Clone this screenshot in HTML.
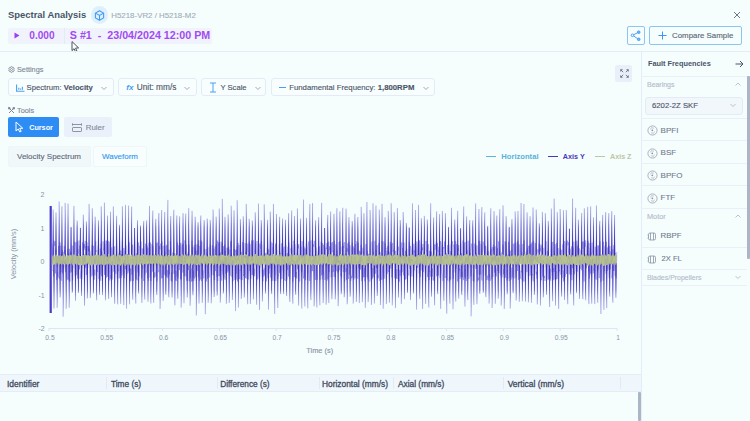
<!DOCTYPE html>
<html><head><meta charset="utf-8">
<style>
*{margin:0;padding:0;box-sizing:border-box}
html,body{width:750px;height:421px;overflow:hidden;background:#f5fefd;font-family:"Liberation Sans",sans-serif;position:relative}
.a{position:absolute;white-space:nowrap}
.m{-webkit-text-stroke:0.12px currentColor}
.mh{-webkit-text-stroke:0.3px currentColor}
.t{line-height:1}
.dd{position:absolute;height:18px;top:78px;border:1px solid #e3ecf6;border-radius:3px;background:#f8fefe}
.dd span{position:absolute;top:4px;font-size:9px;color:#4b5567;line-height:1}
.ffrow{position:absolute;left:641px;width:106px;height:22.6px;border-bottom:1px solid #e9f0f7}
.ffrow span{position:absolute;left:20px;top:7px;font-size:8.5px;color:#717c90;line-height:1}
.th{position:absolute;top:380px;font-size:8px;color:#4b5567;line-height:1;font-weight:bold}
.sep{position:absolute;top:377px;width:1px;height:12px;background:#e3eaf3}
.yl{position:absolute;font-size:7px;color:#8a93a6;line-height:1}
.xl{position:absolute;top:334.5px;font-size:6.7px;color:#8a93a6;line-height:1}
</style></head><body>
<!-- header -->
<div class="a" style="left:90.6px;top:6.4px;width:17.4px;height:17.4px;border-radius:50%;background:#dfeffb"></div>
<svg class="a" style="left:94.3px;top:9.8px" width="11" height="11" viewBox="0 0 24 24" fill="none" stroke="#3b9af2" stroke-width="2.3" stroke-linejoin="round"><path d="M12 1.8 L21 6.8 L21 17.2 L12 22.2 L3 17.2 L3 6.8 Z M3 6.8 L12 11.8 L21 6.8 M12 11.8 L12 22.2"/></svg>
<svg class="a" style="left:733px;top:11px" width="8" height="8" viewBox="0 0 8 8" stroke="#6e7787" stroke-width="1"><path d="M1 1 L7 7 M7 1 L1 7"/></svg>

<div class="a" style="left:8px;top:28px;width:204px;height:16px;background:#f0f3fc;border-radius:2px"></div>
<div class="a" style="left:64px;top:28px;width:1px;height:16px;background:#e6e9f6"></div>
<svg class="a" style="left:14px;top:32px" width="6" height="7" viewBox="0 0 6 7"><path d="M0.5 0.5 L5.5 3.5 L0.5 6.5Z" fill="#9b3ff0"/></svg>
<!-- mouse cursor -->
<svg class="a" style="left:71px;top:41px" width="9" height="12" viewBox="0 0 9 12"><path d="M1 0.6 L1 9.6 L3.1 7.7 L4.5 10.8 L5.9 10.1 L4.6 7.1 L7.6 6.9 Z" fill="#fff" stroke="#3a3f4a" stroke-width="0.9" stroke-linejoin="round"/></svg>

<div class="a" style="left:627px;top:26px;width:18px;height:19px;border:1px solid #8cc4f2;border-radius:2px"></div>
<svg class="a" style="left:630px;top:30px" width="12" height="12" viewBox="0 0 12 12" fill="none" stroke="#3d97ee" stroke-width="0.9"><circle cx="8.7" cy="2.2" r="1.3" fill="#7ab8f2"/><circle cx="2.5" cy="5.3" r="1.3"/><circle cx="8.7" cy="9.3" r="1.3" fill="#7ab8f2"/><path d="M3.7 4.7 L7.5 2.8 M3.7 5.9 L7.5 8.7"/></svg>
<div class="a" style="left:649px;top:26px;width:93px;height:19px;border:1px solid #8cc4f2;border-radius:2px"></div>
<svg class="a" style="left:658px;top:31px" width="9" height="9" viewBox="0 0 9 9" stroke="#3d97ee" stroke-width="1"><path d="M4.5 0.5 V8.5 M0.5 4.5 H8.5"/></svg>

<div class="a" style="left:0;top:51px;width:750px;height:1px;background:#e4edf7"></div>
<div class="a" style="left:641px;top:51px;width:1px;height:370px;background:#e4edf7"></div>

<!-- settings -->
<svg class="a" style="left:7.7px;top:65.8px" width="7" height="7" viewBox="0 0 14 14" fill="none" stroke="#7d8799" stroke-width="1.6"><circle cx="7" cy="7" r="2"/><path d="M7 1 L8.2 2.6 L10.2 2 L10.6 4 L12.6 4.8 L11.6 7 L12.6 9.2 L10.6 10 L10.2 12 L8.2 11.4 L7 13 L5.8 11.4 L3.8 12 L3.4 10 L1.4 9.2 L2.4 7 L1.4 4.8 L3.4 4 L3.8 2 L5.8 2.6 Z"/></svg>

<div class="dd" style="left:8px;width:106px"><svg class="a" style="left:6.6px;top:4.6px" width="9" height="8" viewBox="0 0 9 8" fill="none" stroke="#48a0f0" stroke-width="1.1"><path d="M0.6 0.5 V7.2 H8.5 M2.8 5.8 V3.8 M4.6 5.8 V4.6 M6.4 5.8 V2.8"/></svg><svg class="a" style="left:92.2px;top:6.8px" width="6" height="5" viewBox="0 0 6 5" fill="none" stroke="#8a94a6" stroke-width="0.8"><path d="M0.5,1 L3,3.5 L5.5,1"/></svg></div>
<div class="dd" style="left:118px;width:79px"><span style="left:7.3px;top:4.6px;color:#3f9cf0;font-style:italic;font-weight:bold;font-size:8px">fx</span><svg class="a" style="left:65.3px;top:6.8px" width="6" height="5" viewBox="0 0 6 5" fill="none" stroke="#8a94a6" stroke-width="0.8"><path d="M0.5,1 L3,3.5 L5.5,1"/></svg></div>
<div class="dd" style="left:201px;width:65px"><svg class="a" style="left:7px;top:3px" width="8" height="11" viewBox="0 0 8 11" fill="none" stroke="#48a0f0" stroke-width="1"><path d="M1 1 H7 M1 10 H7 M4 1 V10"/></svg><svg class="a" style="left:52.5px;top:6.8px" width="6" height="5" viewBox="0 0 6 5" fill="none" stroke="#8a94a6" stroke-width="0.8"><path d="M0.5,1 L3,3.5 L5.5,1"/></svg></div>
<div class="dd" style="left:271px;width:164px"><div class="a" style="left:7px;top:8px;width:7px;height:1px;background:#48a0f0"></div><svg class="a" style="left:150.5px;top:6.8px" width="6" height="5" viewBox="0 0 6 5" fill="none" stroke="#8a94a6" stroke-width="0.8"><path d="M0.5,1 L3,3.5 L5.5,1"/></svg></div>

<svg class="a" style="left:8px;top:107.3px" width="7" height="7" viewBox="0 0 7 7" fill="none" stroke="#7d8799" stroke-width="1"><path d="M1 1 L6 6 M6 1 L1 6"/><circle cx="1.2" cy="1.2" r="0.9" fill="#7d8799"/><circle cx="5.8" cy="1.2" r="0.9" fill="#7d8799"/></svg>

<div class="a" style="left:8px;top:117px;width:51px;height:20px;background:#2d8df4;border-radius:2px"></div>
<svg class="a" style="left:15px;top:121px" width="9" height="12" viewBox="0 0 9 12"><path d="M1 1 L1 10 L3.2 8 L4.8 11 L6.2 10.3 L4.7 7.3 L7.8 7.3 Z" fill="none" stroke="#fff" stroke-width="1" stroke-linejoin="round"/></svg>
<div class="a" style="left:64px;top:117px;width:48px;height:20px;background:#eaf1fa;border-radius:2px"></div>
<svg class="a" style="left:71.5px;top:122.5px" width="10" height="9" viewBox="0 0 10 9" fill="none" stroke="#808a9c" stroke-width="0.9"><path d="M0.5 1.5 H9.5 M0.5 0.3 V2.7 M9.5 0.3 V2.7"/><rect x="0.5" y="4.5" width="9" height="4" rx="0.6"/></svg>

<!-- expand icon -->
<div class="a" style="left:615px;top:65px;width:17px;height:17px;background:#e9f0f9;border-radius:2px"></div>
<svg class="a" style="left:619.5px;top:69.3px" width="9" height="9" viewBox="0 0 9 9" fill="none" stroke="#5b6577" stroke-width="0.8"><path d="M0.7 2.6 V0.7 H2.6 M0.7 0.7 L3.2 3.2 M8.3 2.6 V0.7 H6.4 M8.3 0.7 L5.8 3.2 M0.7 6.4 V8.3 H2.6 M0.7 8.3 L3.2 5.8 M8.3 6.4 V8.3 H6.4 M8.3 8.3 L5.8 5.8"/></svg>

<!-- tabs -->
<div class="a" style="left:8px;top:146px;width:83px;height:21px;background:#f1f8fa;border:1px solid #eef6f8;border-radius:2px"></div>
<div class="a" style="left:93px;top:146px;width:54px;height:21px;background:#f8fefe;border:1px solid #eff6f8;border-radius:2px"></div>

<!-- legend -->
<div class="a" style="left:486px;top:156px;width:10px;height:1px;background:#5cb5dd"></div>
<div class="a" style="left:548px;top:156px;width:10px;height:1px;background:#4838bc"></div>
<div class="a" style="left:595px;top:156px;width:10px;height:1px;background:#bcc6a8"></div>

<!-- chart -->
<div class="yl" style="left:40.5px;top:191px">2</div>
<div class="yl" style="left:40.5px;top:224.5px">1</div>
<div class="yl" style="left:40.5px;top:258px">0</div>
<div class="yl" style="left:38.5px;top:291.5px">-1</div>
<div class="yl" style="left:38.5px;top:325px">-2</div>
<div class="a t" style="left:14px;top:253.5px;font-size:7.4px;color:#8a93a6;transform:translate(-50%,-50%) rotate(-90deg);transform-origin:center">Velocity (mm/s)</div>
<svg class="a" style="left:0;top:0" width="750" height="421">
<path d="M49 328.5 H617" stroke="#dfe6f3" stroke-width="1"/>
<path d="M49 328 v3 M105.8 328 v3 M162.6 328 v3 M219.4 328 v3 M276.2 328 v3 M333 328 v3 M389.8 328 v3 M446.6 328 v3 M503.4 328 v3 M560.2 328 v3 M617 328 v3" stroke="#dfe6f3" stroke-width="1"/>
<defs><linearGradient id="gu" gradientUnits="userSpaceOnUse" x1="0" y1="256" x2="0" y2="200"><stop offset="0" stop-color="#3a2abe"/><stop offset="0.55" stop-color="#3f2fc0"/><stop offset="1" stop-color="#4a3ac4" stop-opacity="0.4"/></linearGradient>
<linearGradient id="gd" gradientUnits="userSpaceOnUse" x1="0" y1="264" x2="0" y2="318"><stop offset="0" stop-color="#3a2abe"/><stop offset="0.5" stop-color="#3f2fc0"/><stop offset="1" stop-color="#4a3ac4" stop-opacity="0.4"/></linearGradient></defs>
<path d="M52.10,243.6 L52.48,253.7 L52.86,270.7 L53.24,269.8 L53.62,276.3 L54.00,240.7 L54.38,242.0 L54.76,246.0 L55.14,241.3 L55.52,273.5 L55.90,249.5 L56.28,268.9 L56.66,279.9 L57.04,277.2 L57.42,272.2 L57.80,272.3 L58.18,277.5 L58.56,246.0 L58.94,272.0 L59.32,279.2 L59.70,274.9 L60.08,242.5 L60.46,273.5 L60.84,245.7 L61.22,280.8 L61.60,252.5 L61.98,272.2 L62.36,250.0 L62.74,273.6 L63.12,251.9 L63.50,269.7 L63.88,268.3 L64.26,246.0 L64.64,253.4 L65.02,250.2 L65.40,271.7 L65.78,253.8 L66.16,271.8 L66.54,275.1 L66.92,279.5 L67.30,279.6 L67.68,249.2 L68.06,279.6 L68.44,252.8 L68.82,272.9 L69.20,280.9 L69.58,248.8 L69.96,281.7 L70.34,252.3 L70.72,272.7 L71.10,251.9 L71.48,267.8 L71.86,272.1 L72.24,245.6 L72.62,280.5 L73.00,269.3 L73.38,268.2 L73.76,245.1 L74.14,244.6 L74.52,241.7 L74.90,269.1 L75.28,276.3 L75.66,242.4 L76.04,253.7 L76.42,268.1 L76.80,275.1 L77.18,241.4 L77.56,278.7 L77.94,249.2 L78.32,253.9 L78.70,243.7 L79.08,240.5 L79.46,269.4 L79.84,245.4 L80.22,278.7 L80.60,273.4 L80.98,272.0 L81.36,270.1 L81.74,279.4 L82.12,274.3 L82.50,242.4 L82.88,248.9 L83.26,250.4 L83.64,244.7 L84.02,247.9 L84.40,243.9 L84.78,249.8 L85.16,240.9 L85.54,267.8 L85.92,246.0 L86.30,275.0 L86.68,272.1 L87.06,242.3 L87.44,274.0 L87.82,246.0 L88.20,251.1 L88.58,246.4 L88.96,251.1 L89.34,248.9 L89.72,250.4 L90.10,251.4 L90.48,252.7 L90.86,270.8 L91.24,276.5 L91.62,268.8 L92.00,246.0 L92.38,244.8 L92.76,275.6 L93.14,250.1 L93.52,245.8 L93.90,273.0 L94.28,279.6 L94.66,269.6 L95.04,275.4 L95.42,243.9 L95.80,241.5 L96.18,250.2 L96.56,251.5 L96.94,250.4 L97.32,268.8 L97.70,272.1 L98.08,245.6 L98.46,245.9 L98.84,279.0 L99.22,273.9 L99.60,268.6 L99.98,274.5 L100.36,248.6 L100.74,280.8 L101.12,243.5 L101.50,276.3 L101.88,251.5 L102.26,272.3 L102.64,249.2 L103.02,241.3 L103.40,246.4 L103.78,250.3 L104.16,248.5 L104.54,275.0 L104.92,243.6 L105.30,274.4 L105.68,273.9 L106.06,240.4 L106.44,277.6 L106.82,240.9 L107.20,252.6 L107.58,276.8 L107.96,242.3 L108.34,254.1 L108.72,240.9 L109.10,242.7 L109.48,242.5 L109.86,280.5 L110.24,243.7 L110.62,278.7 L111.00,275.1 L111.38,277.7 L111.76,247.4 L112.14,279.6 L112.52,268.4 L112.90,267.8 L113.28,251.5 L113.66,271.6 L114.04,270.9 L114.42,248.1 L114.80,246.3 L115.18,271.0 L115.56,271.3 L115.94,273.8 L116.32,269.4 L116.70,251.0 L117.08,278.5 L117.46,278.4 L117.84,269.1 L118.22,271.2 L118.60,268.3 L118.98,252.9 L119.36,278.4 L119.74,249.9 L120.12,253.7 L120.50,273.1 L120.88,250.7 L121.26,278.0 L121.64,254.2 L122.02,275.5 L122.40,241.6 L122.78,249.2 L123.16,271.6 L123.54,273.7 L123.92,248.0 L124.30,278.0 L124.68,269.1 L125.06,250.9 L125.44,269.2 L125.82,245.3 L126.20,275.0 L126.58,275.0 L126.96,270.5 L127.34,254.0 L127.72,273.5 L128.10,272.4 L128.48,241.7 L128.86,271.3 L129.24,242.4 L129.62,271.2 L130.00,268.9 L130.38,281.5 L130.76,268.3 L131.14,280.8 L131.52,253.6 L131.90,274.9 L132.28,251.4 L132.66,244.7 L133.04,270.2 L133.42,280.9 L133.80,275.7 L134.18,248.1 L134.56,242.2 L134.94,269.3 L135.32,271.9 L135.70,272.2 L136.08,279.4 L136.46,253.3 L136.84,276.9 L137.22,280.4 L137.60,243.9 L137.98,272.5 L138.36,242.4 L138.74,274.9 L139.12,276.2 L139.50,273.5 L139.88,245.9 L140.26,249.5 L140.64,253.0 L141.02,241.6 L141.40,278.2 L141.78,277.1 L142.16,248.3 L142.54,249.1 L142.92,269.3 L143.30,249.0 L143.68,281.0 L144.06,269.9 L144.44,271.6 L144.82,274.6 L145.20,251.1 L145.58,243.7 L145.96,270.8 L146.34,272.7 L146.72,268.9 L147.10,245.8 L147.48,278.4 L147.86,247.7 L148.24,273.8 L148.62,280.7 L149.00,243.2 L149.38,252.8 L149.76,247.1 L150.14,277.5 L150.52,242.4 L150.90,280.9 L151.28,244.5 L151.66,245.0 L152.04,244.6 L152.42,271.7 L152.80,245.8 L153.18,252.4 L153.56,271.7 L153.94,278.0 L154.32,277.8 L154.70,272.3 L155.08,276.9 L155.46,276.2 L155.84,250.6 L156.22,243.1 L156.60,246.2 L156.98,281.4 L157.36,242.4 L157.74,247.4 L158.12,268.2 L158.50,272.2 L158.88,269.4 L159.26,246.1 L159.64,247.4 L160.02,249.4 L160.40,245.5 L160.78,243.6 L161.16,269.2 L161.54,278.3 L161.92,241.6 L162.30,277.4 L162.68,278.2 L163.06,246.0 L163.44,246.1 L163.82,246.2 L164.20,274.8 L164.58,271.9 L164.96,252.4 L165.34,276.2 L165.72,267.9 L166.10,245.5 L166.48,276.5 L166.86,244.7 L167.24,278.2 L167.62,270.1 L168.00,276.0 L168.38,276.9 L168.76,273.6 L169.14,249.7 L169.52,274.4 L169.90,269.4 L170.28,241.1 L170.66,251.6 L171.04,280.8 L171.42,272.3 L171.80,281.6 L172.18,271.5 L172.56,252.6 L172.94,253.3 L173.32,253.3 L173.70,273.8 L174.08,273.0 L174.46,270.4 L174.84,253.1 L175.22,271.4 L175.60,280.4 L175.98,270.8 L176.36,281.1 L176.74,254.2 L177.12,276.5 L177.50,242.5 L177.88,278.7 L178.26,274.6 L178.64,248.0 L179.02,244.8 L179.40,270.1 L179.78,243.2 L180.16,245.4 L180.54,279.2 L180.92,242.8 L181.30,279.8 L181.68,246.8 L182.06,245.8 L182.44,244.5 L182.82,272.6 L183.20,243.6 L183.58,247.7 L183.96,270.8 L184.34,275.9 L184.72,240.5 L185.10,241.9 L185.48,244.1 L185.86,276.5 L186.24,244.7 L186.62,280.7 L187.00,270.5 L187.38,254.1 L187.76,280.8 L188.14,252.3 L188.52,270.1 L188.90,244.6 L189.28,281.4 L189.66,276.8 L190.04,270.3 L190.42,277.8 L190.80,271.2 L191.18,268.4 L191.56,281.6 L191.94,240.7 L192.32,281.3 L192.70,247.0 L193.08,278.0 L193.46,271.4 L193.84,280.9 L194.22,245.1 L194.60,278.6 L194.98,247.8 L195.36,250.7 L195.74,276.7 L196.12,244.4 L196.50,280.9 L196.88,250.6 L197.26,270.9 L197.64,246.1 L198.02,244.3 L198.40,277.3 L198.78,240.3 L199.16,277.6 L199.54,280.9 L199.92,245.9 L200.30,279.4 L200.68,279.3 L201.06,240.3 L201.44,281.0 L201.82,241.6 L202.20,272.4 L202.58,275.5 L202.96,270.4 L203.34,278.6 L203.72,269.7 L204.10,251.6 L204.48,249.1 L204.86,252.5 L205.24,277.9 L205.62,276.6 L206.00,249.0 L206.38,281.5 L206.76,273.8 L207.14,252.5 L207.52,278.8 L207.90,247.3 L208.28,273.0 L208.66,272.6 L209.04,276.2 L209.42,277.4 L209.80,247.2 L210.18,245.0 L210.56,244.7 L210.94,269.3 L211.32,270.2 L211.70,274.8 L212.08,248.1 L212.46,245.3 L212.84,269.9 L213.22,275.4 L213.60,269.9 L213.98,248.6 L214.36,280.0 L214.74,280.1 L215.12,246.4 L215.50,271.1 L215.88,251.8 L216.26,244.5 L216.64,250.7 L217.02,276.6 L217.40,240.6 L217.78,281.1 L218.16,242.2 L218.54,244.0 L218.92,276.0 L219.30,243.4 L219.68,242.4 L220.06,276.4 L220.44,252.5 L220.82,271.3 L221.20,241.7 L221.58,280.6 L221.96,253.4 L222.34,243.3 L222.72,270.4 L223.10,274.7 L223.48,246.1 L223.86,277.6 L224.24,253.1 L224.62,244.7 L225.00,279.8 L225.38,251.1 L225.76,273.7 L226.14,268.6 L226.52,272.0 L226.90,247.7 L227.28,253.9 L227.66,272.5 L228.04,248.0 L228.42,270.8 L228.80,246.6 L229.18,271.2 L229.56,273.2 L229.94,249.4 L230.32,275.8 L230.70,241.4 L231.08,247.4 L231.46,240.5 L231.84,276.7 L232.22,275.3 L232.60,269.7 L232.98,281.2 L233.36,271.4 L233.74,270.3 L234.12,249.0 L234.50,275.8 L234.88,280.0 L235.26,249.7 L235.64,252.4 L236.02,273.5 L236.40,249.6 L236.78,279.6 L237.16,246.4 L237.54,281.5 L237.92,245.1 L238.30,242.9 L238.68,273.7 L239.06,244.9 L239.44,279.2 L239.82,269.8 L240.20,270.6 L240.58,244.5 L240.96,279.5 L241.34,273.2 L241.72,251.9 L242.10,280.1 L242.48,242.1 L242.86,246.2 L243.24,254.1 L243.62,276.1 L244.00,274.0 L244.38,274.9 L244.76,273.3 L245.14,243.0 L245.52,278.0 L245.90,252.0 L246.28,278.7 L246.66,278.2 L247.04,252.3 L247.42,251.5 L247.80,243.5 L248.18,279.6 L248.56,268.6 L248.94,252.5 L249.32,241.9 L249.70,271.1 L250.08,244.1 L250.46,250.9 L250.84,278.8 L251.22,251.2 L251.60,240.4 L251.98,275.1 L252.36,241.7 L252.74,275.1 L253.12,241.9 L253.50,240.4 L253.88,274.6 L254.26,268.5 L254.64,276.3 L255.02,272.0 L255.40,243.3 L255.78,244.2 L256.16,251.7 L256.54,279.7 L256.92,241.0 L257.30,251.6 L257.68,279.4 L258.06,274.2 L258.44,270.2 L258.82,244.4 L259.20,277.5 L259.58,270.0 L259.96,243.4 L260.34,247.9 L260.72,248.6 L261.10,243.6 L261.48,240.9 L261.86,244.6 L262.24,245.4 L262.62,270.6 L263.00,281.3 L263.38,269.8 L263.76,276.7 L264.14,267.8 L264.52,271.5 L264.90,275.5 L265.28,253.5 L265.66,271.8 L266.04,252.7 L266.42,281.4 L266.80,270.7 L267.18,248.2 L267.56,247.3 L267.94,278.3 L268.32,254.0 L268.70,249.3 L269.08,273.6 L269.46,254.3 L269.84,268.5 L270.22,253.9 L270.60,277.7 L270.98,241.4 L271.36,281.0 L271.74,272.7 L272.12,243.0 L272.50,269.9 L272.88,280.8 L273.26,247.1 L273.64,272.2 L274.02,276.4 L274.40,281.4 L274.78,274.8 L275.16,274.8 L275.54,243.6 L275.92,280.9 L276.30,270.4 L276.68,250.1 L277.06,272.8 L277.44,276.0 L277.82,278.8 L278.20,275.2 L278.58,275.5 L278.96,272.6 L279.34,244.4 L279.72,272.9 L280.10,252.5 L280.48,276.6 L280.86,279.5 L281.24,270.4 L281.62,243.3 L282.00,278.8 L282.38,249.8 L282.76,247.8 L283.14,270.6 L283.52,249.2 L283.90,246.6 L284.28,246.9 L284.66,279.8 L285.04,279.6 L285.42,280.8 L285.80,245.4 L286.18,268.7 L286.56,277.4 L286.94,279.4 L287.32,253.0 L287.70,270.0 L288.08,246.9 L288.46,276.6 L288.84,242.5 L289.22,274.8 L289.60,278.9 L289.98,253.8 L290.36,252.0 L290.74,248.6 L291.12,249.5 L291.50,244.7 L291.88,246.2 L292.26,251.6 L292.64,281.6 L293.02,281.3 L293.40,273.1 L293.78,240.8 L294.16,242.6 L294.54,277.2 L294.92,244.2 L295.30,268.8 L295.68,277.9 L296.06,273.7 L296.44,272.1 L296.82,278.5 L297.20,252.4 L297.58,269.3 L297.96,245.6 L298.34,248.5 L298.72,244.0 L299.10,250.6 L299.48,281.6 L299.86,280.9 L300.24,271.3 L300.62,269.2 L301.00,246.6 L301.38,271.7 L301.76,272.0 L302.14,241.2 L302.52,269.0 L302.90,270.2 L303.28,275.6 L303.66,278.6 L304.04,246.7 L304.42,248.9 L304.80,277.5 L305.18,248.5 L305.56,280.2 L305.94,250.2 L306.32,242.5 L306.70,244.0 L307.08,249.4 L307.46,280.1 L307.84,268.8 L308.22,250.3 L308.60,241.5 L308.98,270.1 L309.36,280.9 L309.74,253.5 L310.12,252.8 L310.50,241.8 L310.88,240.7 L311.26,240.6 L311.64,244.0 L312.02,270.8 L312.40,253.6 L312.78,271.2 L313.16,244.1 L313.54,246.1 L313.92,246.8 L314.30,240.8 L314.68,245.3 L315.06,250.1 L315.44,280.0 L315.82,247.4 L316.20,251.8 L316.58,271.3 L316.96,275.1 L317.34,279.8 L317.72,252.0 L318.10,251.0 L318.48,246.6 L318.86,253.7 L319.24,246.7 L319.62,246.4 L320.00,280.2 L320.38,269.3 L320.76,248.7 L321.14,241.7 L321.52,275.4 L321.90,253.5 L322.28,279.4 L322.66,243.0 L323.04,274.7 L323.42,244.8 L323.80,251.2 L324.18,270.7 L324.56,276.5 L324.94,280.0 L325.32,277.7 L325.70,248.4 L326.08,247.6 L326.46,249.1 L326.84,243.1 L327.22,280.5 L327.60,242.4 L327.98,278.9 L328.36,269.7 L328.74,241.6 L329.12,272.2 L329.50,246.4 L329.88,250.3 L330.26,248.4 L330.64,250.2 L331.02,277.2 L331.40,274.0 L331.78,242.7 L332.16,252.2 L332.54,242.0 L332.92,242.0 L333.30,272.0 L333.68,250.4 L334.06,276.9 L334.44,240.8 L334.82,251.1 L335.20,268.1 L335.58,277.3 L335.96,244.3 L336.34,271.2 L336.72,251.3 L337.10,250.6 L337.48,251.8 L337.86,272.7 L338.24,268.3 L338.62,272.1 L339.00,242.0 L339.38,268.8 L339.76,270.3 L340.14,241.1 L340.52,247.7 L340.90,275.9 L341.28,273.1 L341.66,277.8 L342.04,246.6 L342.42,250.9 L342.80,243.5 L343.18,272.1 L343.56,246.1 L343.94,247.7 L344.32,242.0 L344.70,281.4 L345.08,273.1 L345.46,253.4 L345.84,271.9 L346.22,268.1 L346.60,279.9 L346.98,248.1 L347.36,251.7 L347.74,243.3 L348.12,273.2 L348.50,279.0 L348.88,241.8 L349.26,274.8 L349.64,245.0 L350.02,245.2 L350.40,246.3 L350.78,280.8 L351.16,275.6 L351.54,278.3 L351.92,274.8 L352.30,242.7 L352.68,277.8 L353.06,248.8 L353.44,246.4 L353.82,279.8 L354.20,248.1 L354.58,252.6 L354.96,278.3 L355.34,247.4 L355.72,244.0 L356.10,253.2 L356.48,277.4 L356.86,241.2 L357.24,275.6 L357.62,278.7 L358.00,277.8 L358.38,242.7 L358.76,268.3 L359.14,254.2 L359.52,250.7 L359.90,269.1 L360.28,251.6 L360.66,269.8 L361.04,245.0 L361.42,247.5 L361.80,281.1 L362.18,253.8 L362.56,252.8 L362.94,247.7 L363.32,277.5 L363.70,251.7 L364.08,276.9 L364.46,268.1 L364.84,281.4 L365.22,269.1 L365.60,249.7 L365.98,244.1 L366.36,269.3 L366.74,270.5 L367.12,277.2 L367.50,251.2 L367.88,279.4 L368.26,268.9 L368.64,253.8 L369.02,281.3 L369.40,281.4 L369.78,280.7 L370.16,280.6 L370.54,253.8 L370.92,268.9 L371.30,270.1 L371.68,280.0 L372.06,241.7 L372.44,278.7 L372.82,268.0 L373.20,277.4 L373.58,251.8 L373.96,272.1 L374.34,275.5 L374.72,241.6 L375.10,240.8 L375.48,273.7 L375.86,269.2 L376.24,250.2 L376.62,268.1 L377.00,245.1 L377.38,279.5 L377.76,274.8 L378.14,277.7 L378.52,278.1 L378.90,243.0 L379.28,280.8 L379.66,280.2 L380.04,252.8 L380.42,252.2 L380.80,268.8 L381.18,276.3 L381.56,279.9 L381.94,241.0 L382.32,244.7 L382.70,269.8 L383.08,279.5 L383.46,267.9 L383.84,241.4 L384.22,278.6 L384.60,253.1 L384.98,248.4 L385.36,243.3 L385.74,248.9 L386.12,248.1 L386.50,278.7 L386.88,250.7 L387.26,273.9 L387.64,245.9 L388.02,269.8 L388.40,271.9 L388.78,269.2 L389.16,251.9 L389.54,276.0 L389.92,247.2 L390.30,242.0 L390.68,268.7 L391.06,244.2 L391.44,245.6 L391.82,277.4 L392.20,271.3 L392.58,242.9 L392.96,251.5 L393.34,250.1 L393.72,250.1 L394.10,253.7 L394.48,268.2 L394.86,278.2 L395.24,268.6 L395.62,250.8 L396.00,270.6 L396.38,278.6 L396.76,269.0 L397.14,279.0 L397.52,241.0 L397.90,250.4 L398.28,246.7 L398.66,252.6 L399.04,271.0 L399.42,281.7 L399.80,269.8 L400.18,275.9 L400.56,271.2 L400.94,248.9 L401.32,248.3 L401.70,242.4 L402.08,272.2 L402.46,248.1 L402.84,250.7 L403.22,273.6 L403.60,275.3 L403.98,242.7 L404.36,270.8 L404.74,273.3 L405.12,280.0 L405.50,251.0 L405.88,279.1 L406.26,251.3 L406.64,249.0 L407.02,248.9 L407.40,269.0 L407.78,270.0 L408.16,275.3 L408.54,274.8 L408.92,275.3 L409.30,242.2 L409.68,245.2 L410.06,269.0 L410.44,246.0 L410.82,249.2 L411.20,253.9 L411.58,273.3 L411.96,276.5 L412.34,249.1 L412.72,251.3 L413.10,250.6 L413.48,275.2 L413.86,243.8 L414.24,270.5 L414.62,250.7 L415.00,252.6 L415.38,241.8 L415.76,244.9 L416.14,249.3 L416.52,278.0 L416.90,241.4 L417.28,268.0 L417.66,267.7 L418.04,249.3 L418.42,243.3 L418.80,244.9 L419.18,273.5 L419.56,240.4 L419.94,247.5 L420.32,277.0 L420.70,251.4 L421.08,270.4 L421.46,242.8 L421.84,252.8 L422.22,247.5 L422.60,250.3 L422.98,244.0 L423.36,271.9 L423.74,254.3 L424.12,251.9 L424.50,268.1 L424.88,270.0 L425.26,274.0 L425.64,281.1 L426.02,241.0 L426.40,251.1 L426.78,251.4 L427.16,252.9 L427.54,277.1 L427.92,270.6 L428.30,244.2 L428.68,247.9 L429.06,280.2 L429.44,250.7 L429.82,271.6 L430.20,270.9 L430.58,276.6 L430.96,271.0 L431.34,251.7 L431.72,253.5 L432.10,276.6 L432.48,268.3 L432.86,279.4 L433.24,280.6 L433.62,245.0 L434.00,280.4 L434.38,276.3 L434.76,244.2 L435.14,249.8 L435.52,245.4 L435.90,245.8 L436.28,241.7 L436.66,276.3 L437.04,251.9 L437.42,243.1 L437.80,251.4 L438.18,250.5 L438.56,275.7 L438.94,246.7 L439.32,251.5 L439.70,241.2 L440.08,278.2 L440.46,241.2 L440.84,242.4 L441.22,245.0 L441.60,251.1 L441.98,273.5 L442.36,273.7 L442.74,280.8 L443.12,280.8 L443.50,247.1 L443.88,248.5 L444.26,247.6 L444.64,241.6 L445.02,277.3 L445.40,278.0 L445.78,275.6 L446.16,253.0 L446.54,253.9 L446.92,278.6 L447.30,280.4 L447.68,245.1 L448.06,252.7 L448.44,243.5 L448.82,246.8 L449.20,281.5 L449.58,276.3 L449.96,280.3 L450.34,251.2 L450.72,279.5 L451.10,244.5 L451.48,250.3 L451.86,243.8 L452.24,243.4 L452.62,241.3 L453.00,273.1 L453.38,278.8 L453.76,244.5 L454.14,247.2 L454.52,251.3 L454.90,269.3 L455.28,272.6 L455.66,241.2 L456.04,268.6 L456.42,244.1 L456.80,254.0 L457.18,253.7 L457.56,281.5 L457.94,248.3 L458.32,251.0 L458.70,245.1 L459.08,268.1 L459.46,270.3 L459.84,268.9 L460.22,278.9 L460.60,243.2 L460.98,277.0 L461.36,252.9 L461.74,276.7 L462.12,271.7 L462.50,277.4 L462.88,240.5 L463.26,280.2 L463.64,276.4 L464.02,252.9 L464.40,242.6 L464.78,277.3 L465.16,269.0 L465.54,278.8 L465.92,241.8 L466.30,281.1 L466.68,280.4 L467.06,250.3 L467.44,276.4 L467.82,267.9 L468.20,240.7 L468.58,251.9 L468.96,278.9 L469.34,250.1 L469.72,253.4 L470.10,252.8 L470.48,252.8 L470.86,276.4 L471.24,248.3 L471.62,243.6 L472.00,250.9 L472.38,251.2 L472.76,275.4 L473.14,280.9 L473.52,273.4 L473.90,281.6 L474.28,244.3 L474.66,243.6 L475.04,253.7 L475.42,268.5 L475.80,268.8 L476.18,252.7 L476.56,268.8 L476.94,245.4 L477.32,269.7 L477.70,281.5 L478.08,277.5 L478.46,280.2 L478.84,240.5 L479.22,274.9 L479.60,241.8 L479.98,241.1 L480.36,250.5 L480.74,274.6 L481.12,243.9 L481.50,277.7 L481.88,280.5 L482.26,250.8 L482.64,249.7 L483.02,241.5 L483.40,242.6 L483.78,248.4 L484.16,253.3 L484.54,252.7 L484.92,245.6 L485.30,275.5 L485.68,245.9 L486.06,250.5 L486.44,252.6 L486.82,279.9 L487.20,275.6 L487.58,276.7 L487.96,279.9 L488.34,280.5 L488.72,251.4 L489.10,277.6 L489.48,274.0 L489.86,276.3 L490.24,280.8 L490.62,250.8 L491.00,249.9 L491.38,249.2 L491.76,279.2 L492.14,247.9 L492.52,247.1 L492.90,277.0 L493.28,244.7 L493.66,250.8 L494.04,247.3 L494.42,272.5 L494.80,249.3 L495.18,246.4 L495.56,276.0 L495.94,268.6 L496.32,276.5 L496.70,252.9 L497.08,253.2 L497.46,248.2 L497.84,271.0 L498.22,252.1 L498.60,241.3 L498.98,273.3 L499.36,250.1 L499.74,249.8 L500.12,270.4 L500.50,273.9 L500.88,275.5 L501.26,252.3 L501.64,272.1 L502.02,277.5 L502.40,272.1 L502.78,244.7 L503.16,244.9 L503.54,274.4 L503.92,269.2 L504.30,277.6 L504.68,277.8 L505.06,241.4 L505.44,277.7 L505.82,241.8 L506.20,252.0 L506.58,273.4 L506.96,280.5 L507.34,269.9 L507.72,278.9 L508.10,254.0 L508.48,241.8 L508.86,269.9 L509.24,281.1 L509.62,251.0 L510.00,277.9 L510.38,252.2 L510.76,250.6 L511.14,279.7 L511.52,274.9 L511.90,267.8 L512.28,277.4 L512.66,275.0 L513.04,251.4 L513.42,243.8 L513.80,278.5 L514.18,278.3 L514.56,244.3 L514.94,242.8 L515.32,253.1 L515.70,269.6 L516.08,277.7 L516.46,248.4 L516.84,244.8 L517.22,242.3 L517.60,271.0 L517.98,240.8 L518.36,279.8 L518.74,277.6 L519.12,244.4 L519.50,254.1 L519.88,272.0 L520.26,278.8 L520.64,275.8 L521.02,270.8 L521.40,272.3 L521.78,252.1 L522.16,280.1 L522.54,270.0 L522.92,244.0 L523.30,281.6 L523.68,250.8 L524.06,240.4 L524.44,243.0 L524.82,281.3 L525.20,280.4 L525.58,274.6 L525.96,253.4 L526.34,251.4 L526.72,272.1 L527.10,271.4 L527.48,248.5 L527.86,254.2 L528.24,245.8 L528.62,247.6 L529.00,276.0 L529.38,245.8 L529.76,252.4 L530.14,244.5 L530.52,269.6 L530.90,275.5 L531.28,243.7 L531.66,279.4 L532.04,242.1 L532.42,275.2 L532.80,274.2 L533.18,281.4 L533.56,240.9 L533.94,244.8 L534.32,250.0 L534.70,268.9 L535.08,243.0 L535.46,243.9 L535.84,272.2 L536.22,274.5 L536.60,271.7 L536.98,278.6 L537.36,272.9 L537.74,249.3 L538.12,252.3 L538.50,252.7 L538.88,247.3 L539.26,243.3 L539.64,250.4 L540.02,247.7 L540.40,251.6 L540.78,244.5 L541.16,274.0 L541.54,280.3 L541.92,245.6 L542.30,272.9 L542.68,276.5 L543.06,247.9 L543.44,276.9 L543.82,277.3 L544.20,277.9 L544.58,275.8 L544.96,280.9 L545.34,247.7 L545.72,253.9 L546.10,241.2 L546.48,278.1 L546.86,271.2 L547.24,252.1 L547.62,250.9 L548.00,280.1 L548.38,251.7 L548.76,279.2 L549.14,270.1 L549.52,268.8 L549.90,278.9 L550.28,268.6 L550.66,280.6 L551.04,276.3 L551.42,275.4 L551.80,242.0 L552.18,272.3 L552.56,249.0 L552.94,241.8 L553.32,280.2 L553.70,267.9 L554.08,271.9 L554.46,251.5 L554.84,279.5 L555.22,244.2 L555.60,278.7 L555.98,270.9 L556.36,279.5 L556.74,242.9 L557.12,279.0 L557.50,274.9 L557.88,249.4 L558.26,248.2 L558.64,273.0 L559.02,269.9 L559.40,271.2 L559.78,252.4 L560.16,252.5 L560.54,248.9 L560.92,274.8 L561.30,249.8 L561.68,275.4 L562.06,277.9 L562.44,272.9 L562.82,244.4 L563.20,253.3 L563.58,281.5 L563.96,270.6 L564.34,279.4 L564.72,241.0 L565.10,277.0 L565.48,274.8 L565.86,273.8 L566.24,242.7 L566.62,274.0 L567.00,251.3 L567.38,240.6 L567.76,245.4 L568.14,244.9 L568.52,242.2 L568.90,253.4 L569.28,248.1 L569.66,274.4 L570.04,248.7 L570.42,250.3 L570.80,253.6 L571.18,274.8 L571.56,246.3 L571.94,280.2 L572.32,251.9 L572.70,268.2 L573.08,247.5 L573.46,272.1 L573.84,241.6 L574.22,274.3 L574.60,272.8 L574.98,270.4 L575.36,243.3 L575.74,241.5 L576.12,245.5 L576.50,268.4 L576.88,240.7 L577.26,271.7 L577.64,245.8 L578.02,253.2 L578.40,249.9 L578.78,253.6 L579.16,249.5 L579.54,248.4 L579.92,269.0 L580.30,269.0 L580.68,252.4 L581.06,249.9 L581.44,270.3 L581.82,251.1 L582.20,244.9 L582.58,241.7 L582.96,248.8 L583.34,241.5 L583.72,269.3 L584.10,281.5 L584.48,273.2 L584.86,242.8 L585.24,246.8 L585.62,240.4 L586.00,243.5 L586.38,268.3 L586.76,254.3 L587.14,245.9 L587.52,246.0 L587.90,248.6 L588.28,240.9 L588.66,271.4 L589.04,243.0 L589.42,278.7 L589.80,253.4 L590.18,248.1 L590.56,273.7 L590.94,252.2 L591.32,276.1 L591.70,248.1 L592.08,242.6 L592.46,252.1 L592.84,252.0 L593.22,273.4 L593.60,240.8 L593.98,270.8 L594.36,267.9 L594.74,278.5 L595.12,246.8 L595.50,248.9 L595.88,272.5 L596.26,279.7 L596.64,248.4 L597.02,250.0 L597.40,271.3 L597.78,245.5 L598.16,269.6 L598.54,245.4 L598.92,270.7 L599.30,278.1 L599.68,243.9 L600.06,241.5 L600.44,250.3 L600.82,281.6 L601.20,281.7 L601.58,269.8 L601.96,269.1 L602.34,254.2 L602.72,270.6 L603.10,280.7 L603.48,241.8 L603.86,246.9 L604.24,249.0 L604.62,271.1 L605.00,246.3 L605.38,248.8 L605.76,248.1 L606.14,273.9 L606.52,241.8 L606.90,269.6 L607.28,271.1 L607.66,247.4 L608.04,269.7 L608.42,245.4 L608.80,275.2 L609.18,278.2 L609.56,277.2 L609.94,246.1 L610.32,269.4 L610.70,251.5 L611.08,254.1 L611.46,274.1 L611.84,278.3 L612.22,275.6 L612.60,274.7 L612.98,249.3 L613.36,271.0 L613.74,245.2 L614.12,270.8 L614.50,253.8 L614.88,274.5 L615.26,276.3 L615.64,252.6 L616.02,278.5 L616.40,275.2 L616.78,251.9" fill="none" stroke="#4030c0" stroke-width="0.5" stroke-opacity="0.55"/>
<path d="M52.42,257 L52.87,228 L53.17,209.5 L53.47,228 L53.92,257ZM55.26,257 L55.71,228 L56.01,212.4 L56.31,228 L56.76,257ZM58.40,257 L58.85,228 L59.15,201.5 L59.45,228 L59.90,257ZM61.19,257 L61.64,228 L61.94,206.3 L62.24,228 L62.69,257ZM64.40,257 L64.85,228 L65.15,202.9 L65.45,228 L65.90,257ZM67.29,257 L67.74,228 L68.04,203.6 L68.34,228 L68.79,257ZM70.31,257 L70.76,228 L71.06,226.8 L71.36,228 L71.81,257ZM73.21,257 L73.66,228 L73.96,205.9 L74.26,228 L74.71,257ZM76.36,257 L76.81,228 L77.11,220.5 L77.41,228 L77.86,257ZM79.60,257 L80.05,228 L80.35,227.8 L80.65,228 L81.10,257ZM82.55,257 L83.00,228 L83.30,214.6 L83.60,228 L84.05,257ZM85.64,257 L86.09,228 L86.39,221.4 L86.69,228 L87.14,257ZM88.32,257 L88.77,228 L89.07,203.9 L89.37,228 L89.82,257ZM91.52,257 L91.97,228 L92.27,208.3 L92.57,228 L93.02,257ZM94.35,257 L94.80,228 L95.10,216.6 L95.40,228 L95.85,257ZM97.73,257 L98.18,228 L98.48,220.3 L98.78,228 L99.23,257ZM100.49,257 L100.94,228 L101.24,206.4 L101.54,228 L101.99,257ZM103.68,257 L104.13,228 L104.43,202.6 L104.73,228 L105.18,257ZM106.79,257 L107.24,228 L107.54,215.6 L107.84,228 L108.29,257ZM109.78,257 L110.23,228 L110.53,211.7 L110.83,228 L111.28,257ZM112.60,257 L113.05,228 L113.35,206.5 L113.65,228 L114.10,257ZM115.85,257 L116.30,228 L116.60,215.8 L116.90,228 L117.35,257ZM118.82,257 L119.27,228 L119.57,224.7 L119.87,228 L120.32,257ZM121.65,257 L122.10,228 L122.40,206.3 L122.70,228 L123.15,257ZM124.74,257 L125.19,228 L125.49,204.9 L125.79,228 L126.24,257ZM127.84,257 L128.29,228 L128.59,205.6 L128.89,228 L129.34,257ZM130.88,257 L131.33,228 L131.63,206.6 L131.93,228 L132.38,257ZM133.86,257 L134.31,228 L134.61,227.9 L134.91,228 L135.36,257ZM136.74,257 L137.19,228 L137.49,220.2 L137.79,228 L138.24,257ZM139.73,257 L140.18,228 L140.48,225.4 L140.78,228 L141.23,257ZM142.98,257 L143.43,228 L143.73,220.9 L144.03,228 L144.48,257ZM145.90,257 L146.35,228 L146.65,220.3 L146.95,228 L147.40,257ZM148.75,257 L149.20,228 L149.50,205.9 L149.80,228 L150.25,257ZM152.07,257 L152.52,228 L152.82,210.6 L153.12,228 L153.57,257ZM155.09,257 L155.54,228 L155.84,218.9 L156.14,228 L156.59,257ZM158.13,257 L158.58,228 L158.88,213.0 L159.18,228 L159.63,257ZM160.90,257 L161.35,228 L161.65,210.0 L161.95,228 L162.40,257ZM163.97,257 L164.42,228 L164.72,211.9 L165.02,228 L165.47,257ZM167.12,257 L167.57,228 L167.87,199.9 L168.17,228 L168.62,257ZM170.02,257 L170.47,228 L170.77,216.0 L171.07,228 L171.52,257ZM173.06,257 L173.51,228 L173.81,209.8 L174.11,228 L174.56,257ZM176.11,257 L176.56,228 L176.86,215.5 L177.16,228 L177.61,257ZM178.90,257 L179.35,228 L179.65,216.3 L179.95,228 L180.40,257ZM182.27,257 L182.72,228 L183.02,213.1 L183.32,228 L183.77,257ZM184.96,257 L185.41,228 L185.71,213.7 L186.01,228 L186.46,257ZM188.01,257 L188.46,228 L188.76,208.2 L189.06,228 L189.51,257ZM191.29,257 L191.74,228 L192.04,210.8 L192.34,228 L192.79,257ZM194.38,257 L194.83,228 L195.13,216.7 L195.43,228 L195.88,257ZM197.29,257 L197.74,228 L198.04,222.2 L198.34,228 L198.79,257ZM200.09,257 L200.54,228 L200.84,215.5 L201.14,228 L201.59,257ZM203.35,257 L203.80,228 L204.10,220.1 L204.40,228 L204.85,257ZM206.45,257 L206.90,228 L207.20,218.5 L207.50,228 L207.95,257ZM209.45,257 L209.90,228 L210.20,219.9 L210.50,228 L210.95,257ZM212.32,257 L212.77,228 L213.07,209.5 L213.37,228 L213.82,257ZM215.39,257 L215.84,228 L216.14,216.6 L216.44,228 L216.89,257ZM218.50,257 L218.95,228 L219.25,208.6 L219.55,228 L220.00,257ZM221.55,257 L222.00,228 L222.30,198.9 L222.60,228 L223.05,257ZM224.25,257 L224.70,228 L225.00,216.8 L225.30,228 L225.75,257ZM227.36,257 L227.81,228 L228.11,214.4 L228.41,228 L228.86,257ZM230.44,257 L230.89,228 L231.19,205.7 L231.49,228 L231.94,257ZM233.27,257 L233.72,228 L234.02,210.4 L234.32,228 L234.77,257ZM236.44,257 L236.89,228 L237.19,200.2 L237.49,228 L237.94,257ZM239.64,257 L240.09,228 L240.39,219.1 L240.69,228 L241.14,257ZM242.50,257 L242.95,228 L243.25,216.3 L243.55,228 L244.00,257ZM245.52,257 L245.97,228 L246.27,203.9 L246.57,228 L247.02,257ZM248.42,257 L248.87,228 L249.17,218.8 L249.47,228 L249.92,257ZM251.52,257 L251.97,228 L252.27,220.5 L252.57,228 L253.02,257ZM254.49,257 L254.94,228 L255.24,212.3 L255.54,228 L255.99,257ZM257.72,257 L258.17,228 L258.47,203.6 L258.77,228 L259.22,257ZM260.47,257 L260.92,228 L261.22,220.1 L261.52,228 L261.97,257ZM263.47,257 L263.92,228 L264.22,204.4 L264.52,228 L264.97,257ZM266.86,257 L267.31,228 L267.61,219.8 L267.91,228 L268.36,257ZM269.53,257 L269.98,228 L270.28,211.6 L270.58,228 L271.03,257ZM272.70,257 L273.15,228 L273.45,204.0 L273.75,228 L274.20,257ZM275.71,257 L276.16,228 L276.46,214.0 L276.76,228 L277.21,257ZM278.88,257 L279.33,228 L279.63,216.8 L279.93,228 L280.38,257ZM281.80,257 L282.25,228 L282.55,218.5 L282.85,228 L283.30,257ZM284.74,257 L285.19,228 L285.49,219.8 L285.79,228 L286.24,257ZM287.87,257 L288.32,228 L288.62,213.2 L288.92,228 L289.37,257ZM290.92,257 L291.37,228 L291.67,210.4 L291.97,228 L292.42,257ZM293.72,257 L294.17,228 L294.47,216.0 L294.77,228 L295.22,257ZM296.68,257 L297.13,228 L297.43,208.5 L297.73,228 L298.18,257ZM299.78,257 L300.23,228 L300.53,218.5 L300.83,228 L301.28,257ZM302.75,257 L303.20,228 L303.50,199.6 L303.80,228 L304.25,257ZM305.78,257 L306.23,228 L306.53,217.8 L306.83,228 L307.28,257ZM309.12,257 L309.57,228 L309.87,204.1 L310.17,228 L310.62,257ZM311.79,257 L312.24,228 L312.54,203.1 L312.84,228 L313.29,257ZM314.88,257 L315.33,228 L315.63,220.3 L315.93,228 L316.38,257ZM317.95,257 L318.40,228 L318.70,217.2 L319.00,228 L319.45,257ZM320.89,257 L321.34,228 L321.64,202.9 L321.94,228 L322.39,257ZM323.93,257 L324.38,228 L324.68,227.9 L324.98,228 L325.43,257ZM327.02,257 L327.47,228 L327.77,215.0 L328.07,228 L328.52,257ZM329.90,257 L330.35,228 L330.65,211.5 L330.95,228 L331.40,257ZM333.24,257 L333.69,228 L333.99,213.9 L334.29,228 L334.74,257ZM336.17,257 L336.62,228 L336.92,208.2 L337.22,228 L337.67,257ZM339.18,257 L339.63,228 L339.93,211.3 L340.23,228 L340.68,257ZM342.00,257 L342.45,228 L342.75,207.8 L343.05,228 L343.50,257ZM345.29,257 L345.74,228 L346.04,208.6 L346.34,228 L346.79,257ZM348.23,257 L348.68,228 L348.98,217.1 L349.28,228 L349.73,257ZM351.39,257 L351.84,228 L352.14,220.9 L352.44,228 L352.89,257ZM354.20,257 L354.65,228 L354.95,213.8 L355.25,228 L355.70,257ZM357.14,257 L357.59,228 L357.89,217.0 L358.19,228 L358.64,257ZM360.44,257 L360.89,228 L361.19,206.8 L361.49,228 L361.94,257ZM363.22,257 L363.67,228 L363.97,213.3 L364.27,228 L364.72,257ZM366.20,257 L366.65,228 L366.95,202.0 L367.25,228 L367.70,257ZM369.34,257 L369.79,228 L370.09,210.0 L370.39,228 L370.84,257ZM372.26,257 L372.71,228 L373.01,203.3 L373.31,228 L373.76,257ZM375.23,257 L375.68,228 L375.98,205.5 L376.28,228 L376.73,257ZM378.53,257 L378.98,228 L379.28,209.6 L379.58,228 L380.03,257ZM381.27,257 L381.72,228 L382.02,203.9 L382.32,228 L382.77,257ZM384.28,257 L384.73,228 L385.03,217.1 L385.33,228 L385.78,257ZM387.54,257 L387.99,228 L388.29,210.9 L388.59,228 L389.04,257ZM390.41,257 L390.86,228 L391.16,203.2 L391.46,228 L391.91,257ZM393.43,257 L393.88,228 L394.18,212.1 L394.48,228 L394.93,257ZM396.67,257 L397.12,228 L397.42,208.1 L397.72,228 L398.17,257ZM399.46,257 L399.91,228 L400.21,220.0 L400.51,228 L400.96,257ZM402.41,257 L402.86,228 L403.16,212.1 L403.46,228 L403.91,257ZM405.57,257 L406.02,228 L406.32,222.9 L406.62,228 L407.07,257ZM408.44,257 L408.89,228 L409.19,227.4 L409.49,228 L409.94,257ZM411.74,257 L412.19,228 L412.49,203.4 L412.79,228 L413.24,257ZM414.76,257 L415.21,228 L415.51,210.0 L415.81,228 L416.26,257ZM417.77,257 L418.22,228 L418.52,204.9 L418.82,228 L419.27,257ZM420.58,257 L421.03,228 L421.33,218.2 L421.63,228 L422.08,257ZM423.58,257 L424.03,228 L424.33,215.9 L424.63,228 L425.08,257ZM426.54,257 L426.99,228 L427.29,219.6 L427.59,228 L428.04,257ZM429.93,257 L430.38,228 L430.68,203.3 L430.98,228 L431.43,257ZM432.88,257 L433.33,228 L433.63,217.5 L433.93,228 L434.38,257ZM435.85,257 L436.30,228 L436.60,211.4 L436.90,228 L437.35,257ZM438.84,257 L439.29,228 L439.59,214.1 L439.89,228 L440.34,257ZM441.63,257 L442.08,228 L442.38,210.9 L442.68,228 L443.13,257ZM444.67,257 L445.12,228 L445.42,213.2 L445.72,228 L446.17,257ZM447.82,257 L448.27,228 L448.57,226.8 L448.87,228 L449.32,257ZM450.76,257 L451.21,228 L451.51,207.8 L451.81,228 L452.26,257ZM454.08,257 L454.53,228 L454.83,219.5 L455.13,228 L455.58,257ZM456.96,257 L457.41,228 L457.71,210.8 L458.01,228 L458.46,257ZM459.86,257 L460.31,228 L460.61,228.5 L460.91,228 L461.36,257ZM462.93,257 L463.38,228 L463.68,206.5 L463.98,228 L464.43,257ZM465.86,257 L466.31,228 L466.61,216.4 L466.91,228 L467.36,257ZM469.01,257 L469.46,228 L469.76,220.0 L470.06,228 L470.51,257ZM472.07,257 L472.52,228 L472.82,220.2 L473.12,228 L473.57,257ZM474.88,257 L475.33,228 L475.63,203.5 L475.93,228 L476.38,257ZM478.21,257 L478.66,228 L478.96,209.0 L479.26,228 L479.71,257ZM481.10,257 L481.55,228 L481.85,207.1 L482.15,228 L482.60,257ZM483.99,257 L484.44,228 L484.74,212.4 L485.04,228 L485.49,257ZM486.99,257 L487.44,228 L487.74,225.7 L488.04,228 L488.49,257ZM490.06,257 L490.51,228 L490.81,208.3 L491.11,228 L491.56,257ZM493.28,257 L493.73,228 L494.03,211.1 L494.33,228 L494.78,257ZM496.10,257 L496.55,228 L496.85,215.5 L497.15,228 L497.60,257ZM499.05,257 L499.50,228 L499.80,209.2 L500.10,228 L500.55,257ZM502.28,257 L502.73,228 L503.03,205.4 L503.33,228 L503.78,257ZM505.34,257 L505.79,228 L506.09,216.1 L506.39,228 L506.84,257ZM508.43,257 L508.88,228 L509.18,226.8 L509.48,228 L509.93,257ZM511.21,257 L511.66,228 L511.96,219.0 L512.26,228 L512.71,257ZM514.42,257 L514.87,228 L515.17,211.5 L515.47,228 L515.92,257ZM517.24,257 L517.69,228 L517.99,211.0 L518.29,228 L518.74,257ZM520.30,257 L520.75,228 L521.05,203.0 L521.35,228 L521.80,257ZM523.19,257 L523.64,228 L523.94,204.0 L524.24,228 L524.69,257ZM526.30,257 L526.75,228 L527.05,212.4 L527.35,228 L527.80,257ZM529.29,257 L529.74,228 L530.04,216.2 L530.34,228 L530.79,257ZM532.27,257 L532.72,228 L533.02,207.5 L533.32,228 L533.77,257ZM535.48,257 L535.93,228 L536.23,209.5 L536.53,228 L536.98,257ZM538.51,257 L538.96,228 L539.26,223.3 L539.56,228 L540.01,257ZM541.64,257 L542.09,228 L542.39,211.9 L542.69,228 L543.14,257ZM544.61,257 L545.06,228 L545.36,213.2 L545.66,228 L546.11,257ZM547.50,257 L547.95,228 L548.25,220.9 L548.55,228 L549.00,257ZM550.60,257 L551.05,228 L551.35,208.5 L551.65,228 L552.10,257ZM553.39,257 L553.84,228 L554.14,198.6 L554.44,228 L554.89,257ZM556.49,257 L556.94,228 L557.24,212.1 L557.54,228 L557.99,257ZM559.41,257 L559.86,228 L560.16,209.0 L560.46,228 L560.91,257ZM562.72,257 L563.17,228 L563.47,210.2 L563.77,228 L564.22,257ZM565.55,257 L566.00,228 L566.30,210.0 L566.60,228 L567.05,257ZM568.65,257 L569.10,228 L569.40,229.1 L569.70,228 L570.15,257ZM571.82,257 L572.27,228 L572.57,198.6 L572.87,228 L573.32,257ZM574.91,257 L575.36,228 L575.66,207.8 L575.96,228 L576.41,257ZM577.62,257 L578.07,228 L578.37,219.7 L578.67,228 L579.12,257ZM580.93,257 L581.38,228 L581.68,213.0 L581.98,228 L582.43,257ZM583.58,257 L584.03,228 L584.33,208.3 L584.63,228 L585.08,257ZM586.94,257 L587.39,228 L587.69,206.8 L587.99,228 L588.44,257ZM589.90,257 L590.35,228 L590.65,206.4 L590.95,228 L591.40,257ZM592.71,257 L593.16,228 L593.46,217.4 L593.76,228 L594.21,257ZM595.71,257 L596.16,228 L596.46,205.5 L596.76,228 L597.21,257ZM599.05,257 L599.50,228 L599.80,220.8 L600.10,228 L600.55,257ZM601.93,257 L602.38,228 L602.68,214.9 L602.98,228 L603.43,257ZM604.92,257 L605.37,228 L605.67,212.1 L605.97,228 L606.42,257ZM608.06,257 L608.51,228 L608.81,213.1 L609.11,228 L609.56,257ZM611.04,257 L611.49,228 L611.79,211.1 L612.09,228 L612.54,257ZM613.82,257 L614.27,228 L614.57,215.0 L614.87,228 L615.32,257Z" fill="url(#gu)"/>
<path d="M53.26,263 L53.71,290 L54.01,308.5 L54.31,290 L54.76,263ZM56.37,263 L56.82,290 L57.12,307.8 L57.42,290 L57.87,263ZM59.35,263 L59.80,290 L60.10,297.4 L60.40,290 L60.85,263ZM62.40,263 L62.85,290 L63.15,316.7 L63.45,290 L63.90,263ZM65.41,263 L65.86,290 L66.16,308.8 L66.46,290 L66.91,263ZM68.42,263 L68.87,290 L69.17,307.7 L69.47,290 L69.92,263ZM71.49,263 L71.94,290 L72.24,292.8 L72.54,290 L72.99,263ZM74.78,263 L75.23,290 L75.53,300.8 L75.83,290 L76.28,263ZM77.64,263 L78.09,290 L78.39,293.0 L78.69,290 L79.14,263ZM80.81,263 L81.26,290 L81.56,296.0 L81.86,290 L82.31,263ZM83.77,263 L84.22,290 L84.52,305.7 L84.82,290 L85.27,263ZM86.61,263 L87.06,290 L87.36,298.4 L87.66,290 L88.11,263ZM89.55,263 L90.00,290 L90.30,298.0 L90.60,290 L91.05,263ZM92.67,263 L93.12,290 L93.42,293.5 L93.72,290 L94.17,263ZM95.90,263 L96.35,290 L96.65,300.3 L96.95,290 L97.40,263ZM98.80,263 L99.25,290 L99.55,294.9 L99.85,290 L100.30,263ZM101.75,263 L102.20,290 L102.50,295.2 L102.80,290 L103.25,263ZM104.78,263 L105.23,290 L105.53,300.3 L105.83,290 L106.28,263ZM107.86,263 L108.31,290 L108.61,299.0 L108.91,290 L109.36,263ZM110.77,263 L111.22,290 L111.52,297.3 L111.82,290 L112.27,263ZM113.93,263 L114.38,290 L114.68,303.8 L114.98,290 L115.43,263ZM116.93,263 L117.38,290 L117.68,304.3 L117.98,290 L118.43,263ZM119.95,263 L120.40,290 L120.70,303.9 L121.00,290 L121.45,263ZM123.05,263 L123.50,290 L123.80,305.1 L124.10,290 L124.55,263ZM125.80,263 L126.25,290 L126.55,308.7 L126.85,290 L127.30,263ZM128.82,263 L129.27,290 L129.57,304.3 L129.87,290 L130.32,263ZM132.02,263 L132.47,290 L132.77,299.8 L133.07,290 L133.52,263ZM135.04,263 L135.49,290 L135.79,303.6 L136.09,290 L136.54,263ZM137.88,263 L138.33,290 L138.63,293.6 L138.93,290 L139.38,263ZM141.19,263 L141.64,290 L141.94,302.9 L142.24,290 L142.69,263ZM144.00,263 L144.45,290 L144.75,299.6 L145.05,290 L145.50,263ZM147.25,263 L147.70,290 L148.00,301.8 L148.30,290 L148.75,263ZM150.13,263 L150.58,290 L150.88,303.5 L151.18,290 L151.63,263ZM152.91,263 L153.36,290 L153.66,302.9 L153.96,290 L154.41,263ZM156.08,263 L156.53,290 L156.83,295.1 L157.13,290 L157.58,263ZM159.32,263 L159.77,290 L160.07,309.0 L160.37,290 L160.82,263ZM162.36,263 L162.81,290 L163.11,301.0 L163.41,290 L163.86,263ZM165.11,263 L165.56,290 L165.86,294.8 L166.16,290 L166.61,263ZM168.11,263 L168.56,290 L168.86,297.3 L169.16,290 L169.61,263ZM171.29,263 L171.74,290 L172.04,297.6 L172.34,290 L172.79,263ZM174.18,263 L174.63,290 L174.93,305.4 L175.23,290 L175.68,263ZM177.08,263 L177.53,290 L177.83,298.8 L178.13,290 L178.58,263ZM180.40,263 L180.85,290 L181.15,307.6 L181.45,290 L181.90,263ZM183.26,263 L183.71,290 L184.01,303.3 L184.31,290 L184.76,263ZM186.46,263 L186.91,290 L187.21,297.7 L187.51,290 L187.96,263ZM189.34,263 L189.79,290 L190.09,305.8 L190.39,290 L190.84,263ZM192.20,263 L192.65,290 L192.95,295.3 L193.25,290 L193.70,263ZM195.59,263 L196.04,290 L196.34,315.5 L196.64,290 L197.09,263ZM198.26,263 L198.71,290 L199.01,303.5 L199.31,290 L199.76,263ZM201.48,263 L201.93,290 L202.23,302.9 L202.53,290 L202.98,263ZM204.60,263 L205.05,290 L205.35,314.2 L205.65,290 L206.10,263ZM207.42,263 L207.87,290 L208.17,302.8 L208.47,290 L208.92,263ZM210.51,263 L210.96,290 L211.26,303.3 L211.56,290 L212.01,263ZM213.36,263 L213.81,290 L214.11,297.0 L214.41,290 L214.86,263ZM216.36,263 L216.81,290 L217.11,295.7 L217.41,290 L217.86,263ZM219.54,263 L219.99,290 L220.29,302.6 L220.59,290 L221.04,263ZM222.64,263 L223.09,290 L223.39,293.6 L223.69,290 L224.14,263ZM225.64,263 L226.09,290 L226.39,303.8 L226.69,290 L227.14,263ZM228.46,263 L228.91,290 L229.21,303.0 L229.51,290 L229.96,263ZM231.67,263 L232.12,290 L232.42,300.0 L232.72,290 L233.17,263ZM234.81,263 L235.26,290 L235.56,311.1 L235.86,290 L236.31,263ZM237.66,263 L238.11,290 L238.41,307.6 L238.71,290 L239.16,263ZM240.55,263 L241.00,290 L241.30,299.0 L241.60,290 L242.05,263ZM243.52,263 L243.97,290 L244.27,297.5 L244.57,290 L245.02,263ZM246.91,263 L247.36,290 L247.66,304.2 L247.96,290 L248.41,263ZM249.63,263 L250.08,290 L250.38,304.0 L250.68,290 L251.13,263ZM252.69,263 L253.14,290 L253.44,299.4 L253.74,290 L254.19,263ZM255.86,263 L256.31,290 L256.61,304.7 L256.91,290 L257.36,263ZM258.77,263 L259.22,290 L259.52,309.9 L259.82,290 L260.27,263ZM261.66,263 L262.11,290 L262.41,301.4 L262.71,290 L263.16,263ZM264.81,263 L265.26,290 L265.56,293.6 L265.86,290 L266.31,263ZM267.74,263 L268.19,290 L268.49,309.7 L268.79,290 L269.24,263ZM270.91,263 L271.36,290 L271.66,294.1 L271.96,290 L272.41,263ZM273.94,263 L274.39,290 L274.69,313.9 L274.99,290 L275.44,263ZM277.06,263 L277.51,290 L277.81,308.0 L278.11,290 L278.56,263ZM279.88,263 L280.33,290 L280.63,294.2 L280.93,290 L281.38,263ZM282.87,263 L283.32,290 L283.62,294.1 L283.92,290 L284.37,263ZM285.83,263 L286.28,290 L286.58,296.1 L286.88,290 L287.33,263ZM289.11,263 L289.56,290 L289.86,302.0 L290.16,290 L290.61,263ZM292.11,263 L292.56,290 L292.86,303.7 L293.16,290 L293.61,263ZM294.96,263 L295.41,290 L295.71,294.9 L296.01,290 L296.46,263ZM297.89,263 L298.34,290 L298.64,305.5 L298.94,290 L299.39,263ZM301.06,263 L301.51,290 L301.81,308.6 L302.11,290 L302.56,263ZM304.12,263 L304.57,290 L304.87,306.5 L305.17,290 L305.62,263ZM307.06,263 L307.51,290 L307.81,308.4 L308.11,290 L308.56,263ZM310.16,263 L310.61,290 L310.91,300.1 L311.21,290 L311.66,263ZM313.36,263 L313.81,290 L314.11,306.3 L314.41,290 L314.86,263ZM316.10,263 L316.55,290 L316.85,307.5 L317.15,290 L317.60,263ZM319.11,263 L319.56,290 L319.86,305.3 L320.16,290 L320.61,263ZM322.36,263 L322.81,290 L323.11,303.1 L323.41,290 L323.86,263ZM325.37,263 L325.82,290 L326.12,304.7 L326.42,290 L326.87,263ZM328.07,263 L328.52,290 L328.82,303.1 L329.12,290 L329.57,263ZM331.21,263 L331.66,290 L331.96,299.2 L332.26,290 L332.71,263ZM334.48,263 L334.93,290 L335.23,299.4 L335.53,290 L335.98,263ZM337.40,263 L337.85,290 L338.15,306.1 L338.45,290 L338.90,263ZM340.45,263 L340.90,290 L341.20,294.2 L341.50,290 L341.95,263ZM343.47,263 L343.92,290 L344.22,297.3 L344.52,290 L344.97,263ZM346.43,263 L346.88,290 L347.18,304.2 L347.48,290 L347.93,263ZM349.37,263 L349.82,290 L350.12,296.7 L350.42,290 L350.87,263ZM352.48,263 L352.93,290 L353.23,303.6 L353.53,290 L353.98,263ZM355.60,263 L356.05,290 L356.35,302.0 L356.65,290 L357.10,263ZM358.52,263 L358.97,290 L359.27,303.1 L359.57,290 L360.02,263ZM361.58,263 L362.03,290 L362.33,302.2 L362.63,290 L363.08,263ZM364.55,263 L365.00,290 L365.30,307.8 L365.60,290 L366.05,263ZM367.41,263 L367.86,290 L368.16,302.1 L368.46,290 L368.91,263ZM370.68,263 L371.13,290 L371.43,304.9 L371.73,290 L372.18,263ZM373.65,263 L374.10,290 L374.40,303.5 L374.70,290 L375.15,263ZM376.45,263 L376.90,290 L377.20,296.0 L377.50,290 L377.95,263ZM379.70,263 L380.15,290 L380.45,305.0 L380.75,290 L381.20,263ZM382.46,263 L382.91,290 L383.21,308.8 L383.51,290 L383.96,263ZM385.61,263 L386.06,290 L386.36,304.1 L386.66,290 L387.11,263ZM388.67,263 L389.12,290 L389.42,302.7 L389.72,290 L390.17,263ZM391.54,263 L391.99,290 L392.29,305.4 L392.59,290 L393.04,263ZM394.71,263 L395.16,290 L395.46,308.1 L395.76,290 L396.21,263ZM397.74,263 L398.19,290 L398.49,297.7 L398.79,290 L399.24,263ZM400.59,263 L401.04,290 L401.34,303.9 L401.64,290 L402.09,263ZM403.71,263 L404.16,290 L404.46,299.2 L404.76,290 L405.21,263ZM406.74,263 L407.19,290 L407.49,293.0 L407.79,290 L408.24,263ZM409.72,263 L410.17,290 L410.47,300.1 L410.77,290 L411.22,263ZM412.80,263 L413.25,290 L413.55,293.6 L413.85,290 L414.30,263ZM415.82,263 L416.27,290 L416.57,309.6 L416.87,290 L417.32,263ZM419.03,263 L419.48,290 L419.78,299.1 L420.08,290 L420.53,263ZM421.86,263 L422.31,290 L422.61,309.0 L422.91,290 L423.36,263ZM424.89,263 L425.34,290 L425.64,303.9 L425.94,290 L426.39,263ZM428.06,263 L428.51,290 L428.81,307.5 L429.11,290 L429.56,263ZM430.76,263 L431.21,290 L431.51,296.7 L431.81,290 L432.26,263ZM433.83,263 L434.28,290 L434.58,305.3 L434.88,290 L435.33,263ZM436.94,263 L437.39,290 L437.69,294.2 L437.99,290 L438.44,263ZM439.92,263 L440.37,290 L440.67,308.9 L440.97,290 L441.42,263ZM443.14,263 L443.59,290 L443.89,300.8 L444.19,290 L444.64,263ZM446.00,263 L446.45,290 L446.75,313.6 L447.05,290 L447.50,263ZM449.08,263 L449.53,290 L449.83,303.7 L450.13,290 L450.58,263ZM452.26,263 L452.71,290 L453.01,309.2 L453.31,290 L453.76,263ZM455.03,263 L455.48,290 L455.78,301.6 L456.08,290 L456.53,263ZM458.01,263 L458.46,290 L458.76,298.6 L459.06,290 L459.51,263ZM461.06,263 L461.51,290 L461.81,295.1 L462.11,290 L462.56,263ZM464.22,263 L464.67,290 L464.97,306.6 L465.27,290 L465.72,263ZM467.04,263 L467.49,290 L467.79,300.1 L468.09,290 L468.54,263ZM470.36,263 L470.81,290 L471.11,316.3 L471.41,290 L471.86,263ZM473.12,263 L473.57,290 L473.87,304.8 L474.17,290 L474.62,263ZM476.23,263 L476.68,290 L476.98,304.2 L477.28,290 L477.73,263ZM479.12,263 L479.57,290 L479.87,293.9 L480.17,290 L480.62,263ZM482.45,263 L482.90,290 L483.20,292.8 L483.50,290 L483.95,263ZM485.15,263 L485.60,290 L485.90,297.1 L486.20,290 L486.65,263ZM488.33,263 L488.78,290 L489.08,303.6 L489.38,290 L489.83,263ZM491.35,263 L491.80,290 L492.10,308.0 L492.40,290 L492.85,263ZM494.50,263 L494.95,290 L495.25,303.8 L495.55,290 L496.00,263ZM497.44,263 L497.89,290 L498.19,298.7 L498.49,290 L498.94,263ZM500.46,263 L500.91,290 L501.21,305.6 L501.51,290 L501.96,263ZM503.52,263 L503.97,290 L504.27,309.0 L504.57,290 L505.02,263ZM506.41,263 L506.86,290 L507.16,294.3 L507.46,290 L507.91,263ZM509.47,263 L509.92,290 L510.22,308.5 L510.52,290 L510.97,263ZM512.33,263 L512.78,290 L513.08,293.2 L513.38,290 L513.83,263ZM515.36,263 L515.81,290 L516.11,300.5 L516.41,290 L516.86,263ZM518.55,263 L519.00,290 L519.30,301.8 L519.60,290 L520.05,263ZM521.60,263 L522.05,290 L522.35,301.3 L522.65,290 L523.10,263ZM524.75,263 L525.20,290 L525.50,301.6 L525.80,290 L526.25,263ZM527.69,263 L528.14,290 L528.44,302.3 L528.74,290 L529.19,263ZM530.69,263 L531.14,290 L531.44,302.8 L531.74,290 L532.19,263ZM533.61,263 L534.06,290 L534.36,295.0 L534.66,290 L535.11,263ZM536.55,263 L537.00,290 L537.30,304.4 L537.60,290 L538.05,263ZM539.73,263 L540.18,290 L540.48,305.5 L540.78,290 L541.23,263ZM542.54,263 L542.99,290 L543.29,297.4 L543.59,290 L544.04,263ZM545.80,263 L546.25,290 L546.55,294.9 L546.85,290 L547.30,263ZM548.87,263 L549.32,290 L549.62,307.0 L549.92,290 L550.37,263ZM551.87,263 L552.32,290 L552.62,301.2 L552.92,290 L553.37,263ZM554.78,263 L555.23,290 L555.53,305.6 L555.83,290 L556.28,263ZM557.92,263 L558.37,290 L558.67,309.0 L558.97,290 L559.42,263ZM560.87,263 L561.32,290 L561.62,296.6 L561.92,290 L562.37,263ZM563.78,263 L564.23,290 L564.53,300.0 L564.83,290 L565.28,263ZM566.99,263 L567.44,290 L567.74,304.2 L568.04,290 L568.49,263ZM569.99,263 L570.44,290 L570.74,294.5 L571.04,290 L571.49,263ZM572.94,263 L573.39,290 L573.69,305.5 L573.99,290 L574.44,263ZM575.79,263 L576.24,290 L576.54,293.1 L576.84,290 L577.29,263ZM578.73,263 L579.18,290 L579.48,298.9 L579.78,290 L580.23,263ZM582.11,263 L582.56,290 L582.86,299.2 L583.16,290 L583.61,263ZM584.95,263 L585.40,290 L585.70,300.3 L586.00,290 L586.45,263ZM588.16,263 L588.61,290 L588.91,304.1 L589.21,290 L589.66,263ZM590.99,263 L591.44,290 L591.74,303.7 L592.04,290 L592.49,263ZM594.04,263 L594.49,290 L594.79,304.1 L595.09,290 L595.54,263ZM596.97,263 L597.42,290 L597.72,302.8 L598.02,290 L598.47,263ZM600.20,263 L600.65,290 L600.95,314.0 L601.25,290 L601.70,263ZM603.19,263 L603.64,290 L603.94,309.9 L604.24,290 L604.69,263ZM605.98,263 L606.43,290 L606.73,308.1 L607.03,290 L607.48,263ZM608.96,263 L609.41,290 L609.71,296.6 L610.01,290 L610.46,263ZM612.11,263 L612.56,290 L612.86,302.7 L613.16,290 L613.61,263ZM615.18,263 L615.63,290 L615.93,297.9 L616.23,290 L616.68,263Z" fill="url(#gd)"/>
<path d="M52.87,252 L53.17,209.5 L53.47,252M53.71,270 L54.01,308.5 L54.31,270M55.71,252 L56.01,212.4 L56.31,252M56.82,270 L57.12,307.8 L57.42,270M58.85,252 L59.15,201.5 L59.45,252M59.80,270 L60.10,297.4 L60.40,270M61.64,252 L61.94,206.3 L62.24,252M62.85,270 L63.15,316.7 L63.45,270M64.85,252 L65.15,202.9 L65.45,252M65.86,270 L66.16,308.8 L66.46,270M67.74,252 L68.04,203.6 L68.34,252M68.87,270 L69.17,307.7 L69.47,270M70.76,252 L71.06,226.8 L71.36,252M71.94,270 L72.24,292.8 L72.54,270M73.66,252 L73.96,205.9 L74.26,252M75.23,270 L75.53,300.8 L75.83,270M76.81,252 L77.11,220.5 L77.41,252M78.09,270 L78.39,293.0 L78.69,270M80.05,252 L80.35,227.8 L80.65,252M81.26,270 L81.56,296.0 L81.86,270M83.00,252 L83.30,214.6 L83.60,252M84.22,270 L84.52,305.7 L84.82,270M86.09,252 L86.39,221.4 L86.69,252M87.06,270 L87.36,298.4 L87.66,270M88.77,252 L89.07,203.9 L89.37,252M90.00,270 L90.30,298.0 L90.60,270M91.97,252 L92.27,208.3 L92.57,252M93.12,270 L93.42,293.5 L93.72,270M94.80,252 L95.10,216.6 L95.40,252M96.35,270 L96.65,300.3 L96.95,270M98.18,252 L98.48,220.3 L98.78,252M99.25,270 L99.55,294.9 L99.85,270M100.94,252 L101.24,206.4 L101.54,252M102.20,270 L102.50,295.2 L102.80,270M104.13,252 L104.43,202.6 L104.73,252M105.23,270 L105.53,300.3 L105.83,270M107.24,252 L107.54,215.6 L107.84,252M108.31,270 L108.61,299.0 L108.91,270M110.23,252 L110.53,211.7 L110.83,252M111.22,270 L111.52,297.3 L111.82,270M113.05,252 L113.35,206.5 L113.65,252M114.38,270 L114.68,303.8 L114.98,270M116.30,252 L116.60,215.8 L116.90,252M117.38,270 L117.68,304.3 L117.98,270M119.27,252 L119.57,224.7 L119.87,252M120.40,270 L120.70,303.9 L121.00,270M122.10,252 L122.40,206.3 L122.70,252M123.50,270 L123.80,305.1 L124.10,270M125.19,252 L125.49,204.9 L125.79,252M126.25,270 L126.55,308.7 L126.85,270M128.29,252 L128.59,205.6 L128.89,252M129.27,270 L129.57,304.3 L129.87,270M131.33,252 L131.63,206.6 L131.93,252M132.47,270 L132.77,299.8 L133.07,270M134.31,252 L134.61,227.9 L134.91,252M135.49,270 L135.79,303.6 L136.09,270M137.19,252 L137.49,220.2 L137.79,252M138.33,270 L138.63,293.6 L138.93,270M140.18,252 L140.48,225.4 L140.78,252M141.64,270 L141.94,302.9 L142.24,270M143.43,252 L143.73,220.9 L144.03,252M144.45,270 L144.75,299.6 L145.05,270M146.35,252 L146.65,220.3 L146.95,252M147.70,270 L148.00,301.8 L148.30,270M149.20,252 L149.50,205.9 L149.80,252M150.58,270 L150.88,303.5 L151.18,270M152.52,252 L152.82,210.6 L153.12,252M153.36,270 L153.66,302.9 L153.96,270M155.54,252 L155.84,218.9 L156.14,252M156.53,270 L156.83,295.1 L157.13,270M158.58,252 L158.88,213.0 L159.18,252M159.77,270 L160.07,309.0 L160.37,270M161.35,252 L161.65,210.0 L161.95,252M162.81,270 L163.11,301.0 L163.41,270M164.42,252 L164.72,211.9 L165.02,252M165.56,270 L165.86,294.8 L166.16,270M167.57,252 L167.87,199.9 L168.17,252M168.56,270 L168.86,297.3 L169.16,270M170.47,252 L170.77,216.0 L171.07,252M171.74,270 L172.04,297.6 L172.34,270M173.51,252 L173.81,209.8 L174.11,252M174.63,270 L174.93,305.4 L175.23,270M176.56,252 L176.86,215.5 L177.16,252M177.53,270 L177.83,298.8 L178.13,270M179.35,252 L179.65,216.3 L179.95,252M180.85,270 L181.15,307.6 L181.45,270M182.72,252 L183.02,213.1 L183.32,252M183.71,270 L184.01,303.3 L184.31,270M185.41,252 L185.71,213.7 L186.01,252M186.91,270 L187.21,297.7 L187.51,270M188.46,252 L188.76,208.2 L189.06,252M189.79,270 L190.09,305.8 L190.39,270M191.74,252 L192.04,210.8 L192.34,252M192.65,270 L192.95,295.3 L193.25,270M194.83,252 L195.13,216.7 L195.43,252M196.04,270 L196.34,315.5 L196.64,270M197.74,252 L198.04,222.2 L198.34,252M198.71,270 L199.01,303.5 L199.31,270M200.54,252 L200.84,215.5 L201.14,252M201.93,270 L202.23,302.9 L202.53,270M203.80,252 L204.10,220.1 L204.40,252M205.05,270 L205.35,314.2 L205.65,270M206.90,252 L207.20,218.5 L207.50,252M207.87,270 L208.17,302.8 L208.47,270M209.90,252 L210.20,219.9 L210.50,252M210.96,270 L211.26,303.3 L211.56,270M212.77,252 L213.07,209.5 L213.37,252M213.81,270 L214.11,297.0 L214.41,270M215.84,252 L216.14,216.6 L216.44,252M216.81,270 L217.11,295.7 L217.41,270M218.95,252 L219.25,208.6 L219.55,252M219.99,270 L220.29,302.6 L220.59,270M222.00,252 L222.30,198.9 L222.60,252M223.09,270 L223.39,293.6 L223.69,270M224.70,252 L225.00,216.8 L225.30,252M226.09,270 L226.39,303.8 L226.69,270M227.81,252 L228.11,214.4 L228.41,252M228.91,270 L229.21,303.0 L229.51,270M230.89,252 L231.19,205.7 L231.49,252M232.12,270 L232.42,300.0 L232.72,270M233.72,252 L234.02,210.4 L234.32,252M235.26,270 L235.56,311.1 L235.86,270M236.89,252 L237.19,200.2 L237.49,252M238.11,270 L238.41,307.6 L238.71,270M240.09,252 L240.39,219.1 L240.69,252M241.00,270 L241.30,299.0 L241.60,270M242.95,252 L243.25,216.3 L243.55,252M243.97,270 L244.27,297.5 L244.57,270M245.97,252 L246.27,203.9 L246.57,252M247.36,270 L247.66,304.2 L247.96,270M248.87,252 L249.17,218.8 L249.47,252M250.08,270 L250.38,304.0 L250.68,270M251.97,252 L252.27,220.5 L252.57,252M253.14,270 L253.44,299.4 L253.74,270M254.94,252 L255.24,212.3 L255.54,252M256.31,270 L256.61,304.7 L256.91,270M258.17,252 L258.47,203.6 L258.77,252M259.22,270 L259.52,309.9 L259.82,270M260.92,252 L261.22,220.1 L261.52,252M262.11,270 L262.41,301.4 L262.71,270M263.92,252 L264.22,204.4 L264.52,252M265.26,270 L265.56,293.6 L265.86,270M267.31,252 L267.61,219.8 L267.91,252M268.19,270 L268.49,309.7 L268.79,270M269.98,252 L270.28,211.6 L270.58,252M271.36,270 L271.66,294.1 L271.96,270M273.15,252 L273.45,204.0 L273.75,252M274.39,270 L274.69,313.9 L274.99,270M276.16,252 L276.46,214.0 L276.76,252M277.51,270 L277.81,308.0 L278.11,270M279.33,252 L279.63,216.8 L279.93,252M280.33,270 L280.63,294.2 L280.93,270M282.25,252 L282.55,218.5 L282.85,252M283.32,270 L283.62,294.1 L283.92,270M285.19,252 L285.49,219.8 L285.79,252M286.28,270 L286.58,296.1 L286.88,270M288.32,252 L288.62,213.2 L288.92,252M289.56,270 L289.86,302.0 L290.16,270M291.37,252 L291.67,210.4 L291.97,252M292.56,270 L292.86,303.7 L293.16,270M294.17,252 L294.47,216.0 L294.77,252M295.41,270 L295.71,294.9 L296.01,270M297.13,252 L297.43,208.5 L297.73,252M298.34,270 L298.64,305.5 L298.94,270M300.23,252 L300.53,218.5 L300.83,252M301.51,270 L301.81,308.6 L302.11,270M303.20,252 L303.50,199.6 L303.80,252M304.57,270 L304.87,306.5 L305.17,270M306.23,252 L306.53,217.8 L306.83,252M307.51,270 L307.81,308.4 L308.11,270M309.57,252 L309.87,204.1 L310.17,252M310.61,270 L310.91,300.1 L311.21,270M312.24,252 L312.54,203.1 L312.84,252M313.81,270 L314.11,306.3 L314.41,270M315.33,252 L315.63,220.3 L315.93,252M316.55,270 L316.85,307.5 L317.15,270M318.40,252 L318.70,217.2 L319.00,252M319.56,270 L319.86,305.3 L320.16,270M321.34,252 L321.64,202.9 L321.94,252M322.81,270 L323.11,303.1 L323.41,270M324.38,252 L324.68,227.9 L324.98,252M325.82,270 L326.12,304.7 L326.42,270M327.47,252 L327.77,215.0 L328.07,252M328.52,270 L328.82,303.1 L329.12,270M330.35,252 L330.65,211.5 L330.95,252M331.66,270 L331.96,299.2 L332.26,270M333.69,252 L333.99,213.9 L334.29,252M334.93,270 L335.23,299.4 L335.53,270M336.62,252 L336.92,208.2 L337.22,252M337.85,270 L338.15,306.1 L338.45,270M339.63,252 L339.93,211.3 L340.23,252M340.90,270 L341.20,294.2 L341.50,270M342.45,252 L342.75,207.8 L343.05,252M343.92,270 L344.22,297.3 L344.52,270M345.74,252 L346.04,208.6 L346.34,252M346.88,270 L347.18,304.2 L347.48,270M348.68,252 L348.98,217.1 L349.28,252M349.82,270 L350.12,296.7 L350.42,270M351.84,252 L352.14,220.9 L352.44,252M352.93,270 L353.23,303.6 L353.53,270M354.65,252 L354.95,213.8 L355.25,252M356.05,270 L356.35,302.0 L356.65,270M357.59,252 L357.89,217.0 L358.19,252M358.97,270 L359.27,303.1 L359.57,270M360.89,252 L361.19,206.8 L361.49,252M362.03,270 L362.33,302.2 L362.63,270M363.67,252 L363.97,213.3 L364.27,252M365.00,270 L365.30,307.8 L365.60,270M366.65,252 L366.95,202.0 L367.25,252M367.86,270 L368.16,302.1 L368.46,270M369.79,252 L370.09,210.0 L370.39,252M371.13,270 L371.43,304.9 L371.73,270M372.71,252 L373.01,203.3 L373.31,252M374.10,270 L374.40,303.5 L374.70,270M375.68,252 L375.98,205.5 L376.28,252M376.90,270 L377.20,296.0 L377.50,270M378.98,252 L379.28,209.6 L379.58,252M380.15,270 L380.45,305.0 L380.75,270M381.72,252 L382.02,203.9 L382.32,252M382.91,270 L383.21,308.8 L383.51,270M384.73,252 L385.03,217.1 L385.33,252M386.06,270 L386.36,304.1 L386.66,270M387.99,252 L388.29,210.9 L388.59,252M389.12,270 L389.42,302.7 L389.72,270M390.86,252 L391.16,203.2 L391.46,252M391.99,270 L392.29,305.4 L392.59,270M393.88,252 L394.18,212.1 L394.48,252M395.16,270 L395.46,308.1 L395.76,270M397.12,252 L397.42,208.1 L397.72,252M398.19,270 L398.49,297.7 L398.79,270M399.91,252 L400.21,220.0 L400.51,252M401.04,270 L401.34,303.9 L401.64,270M402.86,252 L403.16,212.1 L403.46,252M404.16,270 L404.46,299.2 L404.76,270M406.02,252 L406.32,222.9 L406.62,252M407.19,270 L407.49,293.0 L407.79,270M408.89,252 L409.19,227.4 L409.49,252M410.17,270 L410.47,300.1 L410.77,270M412.19,252 L412.49,203.4 L412.79,252M413.25,270 L413.55,293.6 L413.85,270M415.21,252 L415.51,210.0 L415.81,252M416.27,270 L416.57,309.6 L416.87,270M418.22,252 L418.52,204.9 L418.82,252M419.48,270 L419.78,299.1 L420.08,270M421.03,252 L421.33,218.2 L421.63,252M422.31,270 L422.61,309.0 L422.91,270M424.03,252 L424.33,215.9 L424.63,252M425.34,270 L425.64,303.9 L425.94,270M426.99,252 L427.29,219.6 L427.59,252M428.51,270 L428.81,307.5 L429.11,270M430.38,252 L430.68,203.3 L430.98,252M431.21,270 L431.51,296.7 L431.81,270M433.33,252 L433.63,217.5 L433.93,252M434.28,270 L434.58,305.3 L434.88,270M436.30,252 L436.60,211.4 L436.90,252M437.39,270 L437.69,294.2 L437.99,270M439.29,252 L439.59,214.1 L439.89,252M440.37,270 L440.67,308.9 L440.97,270M442.08,252 L442.38,210.9 L442.68,252M443.59,270 L443.89,300.8 L444.19,270M445.12,252 L445.42,213.2 L445.72,252M446.45,270 L446.75,313.6 L447.05,270M448.27,252 L448.57,226.8 L448.87,252M449.53,270 L449.83,303.7 L450.13,270M451.21,252 L451.51,207.8 L451.81,252M452.71,270 L453.01,309.2 L453.31,270M454.53,252 L454.83,219.5 L455.13,252M455.48,270 L455.78,301.6 L456.08,270M457.41,252 L457.71,210.8 L458.01,252M458.46,270 L458.76,298.6 L459.06,270M460.31,252 L460.61,228.5 L460.91,252M461.51,270 L461.81,295.1 L462.11,270M463.38,252 L463.68,206.5 L463.98,252M464.67,270 L464.97,306.6 L465.27,270M466.31,252 L466.61,216.4 L466.91,252M467.49,270 L467.79,300.1 L468.09,270M469.46,252 L469.76,220.0 L470.06,252M470.81,270 L471.11,316.3 L471.41,270M472.52,252 L472.82,220.2 L473.12,252M473.57,270 L473.87,304.8 L474.17,270M475.33,252 L475.63,203.5 L475.93,252M476.68,270 L476.98,304.2 L477.28,270M478.66,252 L478.96,209.0 L479.26,252M479.57,270 L479.87,293.9 L480.17,270M481.55,252 L481.85,207.1 L482.15,252M482.90,270 L483.20,292.8 L483.50,270M484.44,252 L484.74,212.4 L485.04,252M485.60,270 L485.90,297.1 L486.20,270M487.44,252 L487.74,225.7 L488.04,252M488.78,270 L489.08,303.6 L489.38,270M490.51,252 L490.81,208.3 L491.11,252M491.80,270 L492.10,308.0 L492.40,270M493.73,252 L494.03,211.1 L494.33,252M494.95,270 L495.25,303.8 L495.55,270M496.55,252 L496.85,215.5 L497.15,252M497.89,270 L498.19,298.7 L498.49,270M499.50,252 L499.80,209.2 L500.10,252M500.91,270 L501.21,305.6 L501.51,270M502.73,252 L503.03,205.4 L503.33,252M503.97,270 L504.27,309.0 L504.57,270M505.79,252 L506.09,216.1 L506.39,252M506.86,270 L507.16,294.3 L507.46,270M508.88,252 L509.18,226.8 L509.48,252M509.92,270 L510.22,308.5 L510.52,270M511.66,252 L511.96,219.0 L512.26,252M512.78,270 L513.08,293.2 L513.38,270M514.87,252 L515.17,211.5 L515.47,252M515.81,270 L516.11,300.5 L516.41,270M517.69,252 L517.99,211.0 L518.29,252M519.00,270 L519.30,301.8 L519.60,270M520.75,252 L521.05,203.0 L521.35,252M522.05,270 L522.35,301.3 L522.65,270M523.64,252 L523.94,204.0 L524.24,252M525.20,270 L525.50,301.6 L525.80,270M526.75,252 L527.05,212.4 L527.35,252M528.14,270 L528.44,302.3 L528.74,270M529.74,252 L530.04,216.2 L530.34,252M531.14,270 L531.44,302.8 L531.74,270M532.72,252 L533.02,207.5 L533.32,252M534.06,270 L534.36,295.0 L534.66,270M535.93,252 L536.23,209.5 L536.53,252M537.00,270 L537.30,304.4 L537.60,270M538.96,252 L539.26,223.3 L539.56,252M540.18,270 L540.48,305.5 L540.78,270M542.09,252 L542.39,211.9 L542.69,252M542.99,270 L543.29,297.4 L543.59,270M545.06,252 L545.36,213.2 L545.66,252M546.25,270 L546.55,294.9 L546.85,270M547.95,252 L548.25,220.9 L548.55,252M549.32,270 L549.62,307.0 L549.92,270M551.05,252 L551.35,208.5 L551.65,252M552.32,270 L552.62,301.2 L552.92,270M553.84,252 L554.14,198.6 L554.44,252M555.23,270 L555.53,305.6 L555.83,270M556.94,252 L557.24,212.1 L557.54,252M558.37,270 L558.67,309.0 L558.97,270M559.86,252 L560.16,209.0 L560.46,252M561.32,270 L561.62,296.6 L561.92,270M563.17,252 L563.47,210.2 L563.77,252M564.23,270 L564.53,300.0 L564.83,270M566.00,252 L566.30,210.0 L566.60,252M567.44,270 L567.74,304.2 L568.04,270M569.10,252 L569.40,229.1 L569.70,252M570.44,270 L570.74,294.5 L571.04,270M572.27,252 L572.57,198.6 L572.87,252M573.39,270 L573.69,305.5 L573.99,270M575.36,252 L575.66,207.8 L575.96,252M576.24,270 L576.54,293.1 L576.84,270M578.07,252 L578.37,219.7 L578.67,252M579.18,270 L579.48,298.9 L579.78,270M581.38,252 L581.68,213.0 L581.98,252M582.56,270 L582.86,299.2 L583.16,270M584.03,252 L584.33,208.3 L584.63,252M585.40,270 L585.70,300.3 L586.00,270M587.39,252 L587.69,206.8 L587.99,252M588.61,270 L588.91,304.1 L589.21,270M590.35,252 L590.65,206.4 L590.95,252M591.44,270 L591.74,303.7 L592.04,270M593.16,252 L593.46,217.4 L593.76,252M594.49,270 L594.79,304.1 L595.09,270M596.16,252 L596.46,205.5 L596.76,252M597.42,270 L597.72,302.8 L598.02,270M599.50,252 L599.80,220.8 L600.10,252M600.65,270 L600.95,314.0 L601.25,270M602.38,252 L602.68,214.9 L602.98,252M603.64,270 L603.94,309.9 L604.24,270M605.37,252 L605.67,212.1 L605.97,252M606.43,270 L606.73,308.1 L607.03,270M608.51,252 L608.81,213.1 L609.11,252M609.41,270 L609.71,296.6 L610.01,270M611.49,252 L611.79,211.1 L612.09,252M612.56,270 L612.86,302.7 L613.16,270M614.27,252 L614.57,215.0 L614.87,252M615.63,270 L615.93,297.9 L616.23,270" fill="none" stroke="#4a3ac4" stroke-width="0.45" stroke-opacity="0.5"/>
<rect x="49.6" y="206" width="2.2" height="107" fill="#4c3bc8"/>
<path d="M51.8,254.6 L52.5,256.8 L53.2,254.1 L53.9,256.8 L54.6,256.7 L55.3,256.5 L56.0,253.9 L56.7,255.2 L57.4,256.1 L58.1,254.4 L58.8,256.0 L59.5,255.6 L60.2,254.6 L60.9,255.7 L61.6,256.2 L62.3,255.7 L63.0,254.7 L63.7,255.1 L64.4,253.9 L65.1,254.9 L65.8,256.8 L66.5,256.7 L67.2,255.8 L67.9,254.5 L68.6,256.0 L69.3,255.4 L70.0,254.6 L70.7,255.3 L71.4,254.4 L72.1,256.8 L72.8,256.5 L73.5,254.3 L74.2,254.5 L74.9,254.5 L75.6,255.9 L76.3,255.4 L77.0,256.0 L77.7,256.1 L78.4,254.2 L79.1,255.1 L79.8,256.0 L80.5,255.9 L81.2,256.5 L81.9,255.2 L82.6,254.8 L83.3,255.6 L84.0,254.4 L84.7,254.1 L85.4,255.2 L86.1,254.9 L86.8,255.5 L87.5,255.2 L88.2,255.3 L88.9,255.0 L89.6,256.2 L90.3,255.4 L91.0,254.9 L91.7,255.8 L92.4,256.1 L93.1,254.5 L93.8,255.2 L94.5,255.7 L95.2,254.6 L95.9,255.1 L96.6,254.7 L97.3,255.7 L98.0,254.1 L98.7,255.6 L99.4,253.9 L100.1,256.2 L100.8,255.8 L101.5,254.9 L102.2,256.1 L102.9,255.4 L103.6,254.7 L104.3,253.9 L105.0,254.7 L105.7,256.7 L106.4,256.0 L107.1,256.8 L107.8,256.4 L108.5,254.8 L109.2,254.3 L109.9,254.8 L110.6,256.4 L111.3,255.6 L112.0,256.1 L112.7,255.3 L113.4,254.6 L114.1,254.7 L114.8,254.5 L115.5,254.4 L116.2,256.5 L116.9,255.1 L117.6,254.2 L118.3,254.7 L119.0,254.0 L119.7,255.6 L120.4,255.1 L121.1,255.8 L121.8,256.3 L122.5,256.1 L123.2,254.7 L123.9,255.9 L124.6,255.9 L125.3,253.9 L126.0,255.1 L126.7,255.0 L127.4,255.8 L128.1,254.5 L128.8,254.8 L129.5,254.7 L130.2,256.0 L130.9,255.3 L131.6,254.3 L132.3,256.7 L133.0,256.2 L133.7,254.5 L134.4,256.4 L135.1,254.3 L135.8,256.5 L136.5,254.4 L137.2,254.2 L137.9,255.4 L138.6,254.3 L139.3,254.6 L140.0,256.1 L140.7,255.3 L141.4,255.0 L142.1,255.9 L142.8,255.4 L143.5,254.2 L144.2,254.1 L144.9,255.8 L145.6,256.4 L146.3,254.9 L147.0,254.7 L147.7,254.8 L148.4,256.2 L149.1,255.8 L149.8,255.0 L150.5,254.3 L151.2,256.0 L151.9,254.5 L152.6,255.7 L153.3,255.6 L154.0,255.1 L154.7,254.3 L155.4,255.0 L156.1,255.3 L156.8,256.4 L157.5,254.8 L158.2,254.1 L158.9,254.7 L159.6,256.5 L160.3,254.4 L161.0,255.9 L161.7,254.8 L162.4,256.6 L163.1,255.9 L163.8,255.8 L164.5,256.6 L165.2,255.8 L165.9,254.0 L166.6,254.0 L167.3,256.7 L168.0,254.9 L168.7,255.1 L169.4,254.8 L170.1,256.0 L170.8,255.6 L171.5,255.0 L172.2,254.0 L172.9,254.9 L173.6,255.9 L174.3,255.6 L175.0,255.5 L175.7,254.4 L176.4,255.8 L177.1,254.1 L177.8,255.2 L178.5,256.4 L179.2,255.6 L179.9,256.2 L180.6,256.6 L181.3,254.7 L182.0,254.1 L182.7,254.4 L183.4,255.2 L184.1,256.1 L184.8,254.2 L185.5,254.6 L186.2,256.4 L186.9,255.4 L187.6,255.1 L188.3,256.5 L189.0,254.5 L189.7,255.2 L190.4,254.7 L191.1,256.8 L191.8,253.9 L192.5,254.8 L193.2,256.7 L193.9,254.2 L194.6,256.8 L195.3,254.2 L196.0,255.3 L196.7,255.4 L197.4,255.1 L198.1,255.9 L198.8,254.1 L199.5,254.6 L200.2,256.4 L200.9,255.8 L201.6,253.8 L202.3,255.1 L203.0,256.8 L203.7,255.7 L204.4,254.3 L205.1,256.3 L205.8,255.3 L206.5,255.6 L207.2,256.5 L207.9,256.2 L208.6,256.6 L209.3,254.5 L210.0,255.9 L210.7,255.6 L211.4,255.0 L212.1,254.7 L212.8,256.0 L213.5,255.5 L214.2,255.6 L214.9,255.0 L215.6,254.9 L216.3,255.3 L217.0,255.8 L217.7,255.1 L218.4,255.4 L219.1,256.2 L219.8,254.9 L220.5,255.5 L221.2,254.3 L221.9,254.9 L222.6,254.6 L223.3,255.2 L224.0,254.5 L224.7,256.0 L225.4,255.9 L226.1,254.2 L226.8,255.7 L227.5,256.0 L228.2,254.0 L228.9,255.4 L229.6,253.9 L230.3,256.5 L231.0,256.5 L231.7,256.1 L232.4,255.4 L233.1,256.2 L233.8,255.0 L234.5,256.0 L235.2,256.6 L235.9,253.9 L236.6,256.6 L237.3,255.7 L238.0,254.9 L238.7,254.1 L239.4,256.0 L240.1,255.2 L240.8,254.4 L241.5,253.9 L242.2,254.7 L242.9,255.2 L243.6,254.6 L244.3,256.2 L245.0,254.8 L245.7,253.9 L246.4,254.8 L247.1,254.6 L247.8,256.0 L248.5,256.2 L249.2,256.4 L249.9,255.4 L250.6,254.7 L251.3,254.9 L252.0,256.7 L252.7,256.1 L253.4,256.5 L254.1,256.5 L254.8,253.9 L255.5,253.9 L256.2,254.2 L256.9,253.9 L257.6,255.9 L258.3,256.0 L259.0,255.5 L259.7,256.2 L260.4,255.9 L261.1,255.3 L261.8,255.6 L262.5,254.4 L263.2,256.3 L263.9,254.2 L264.6,256.7 L265.3,253.9 L266.0,255.5 L266.7,255.6 L267.4,254.1 L268.1,255.2 L268.8,255.3 L269.5,255.8 L270.2,255.8 L270.9,254.5 L271.6,255.1 L272.3,256.5 L273.0,254.0 L273.7,254.0 L274.4,254.6 L275.1,255.3 L275.8,256.1 L276.5,254.6 L277.2,255.0 L277.9,255.5 L278.6,254.5 L279.3,254.1 L280.0,256.8 L280.7,254.1 L281.4,254.4 L282.1,255.6 L282.8,256.4 L283.5,256.7 L284.2,256.3 L284.9,255.7 L285.6,256.8 L286.3,255.6 L287.0,256.0 L287.7,256.6 L288.4,256.4 L289.1,255.6 L289.8,256.1 L290.5,254.2 L291.2,253.8 L291.9,255.3 L292.6,256.4 L293.3,254.8 L294.0,254.8 L294.7,255.0 L295.4,255.4 L296.1,256.7 L296.8,254.6 L297.5,255.6 L298.2,254.3 L298.9,255.6 L299.6,255.4 L300.3,255.2 L301.0,254.7 L301.7,255.7 L302.4,256.5 L303.1,256.4 L303.8,254.8 L304.5,254.9 L305.2,254.0 L305.9,255.9 L306.6,254.0 L307.3,254.5 L308.0,255.2 L308.7,255.6 L309.4,255.5 L310.1,256.2 L310.8,255.7 L311.5,256.4 L312.2,255.5 L312.9,256.4 L313.6,254.8 L314.3,255.6 L315.0,255.6 L315.7,256.1 L316.4,255.8 L317.1,255.2 L317.8,253.9 L318.5,256.0 L319.2,254.1 L319.9,255.7 L320.6,256.6 L321.3,254.4 L322.0,253.9 L322.7,253.9 L323.4,255.7 L324.1,254.2 L324.8,254.7 L325.5,255.6 L326.2,253.9 L326.9,256.4 L327.6,256.6 L328.3,254.3 L329.0,254.0 L329.7,255.6 L330.4,254.0 L331.1,254.6 L331.8,254.4 L332.5,254.7 L333.2,256.4 L333.9,254.5 L334.6,255.4 L335.3,256.6 L336.0,255.3 L336.7,256.8 L337.4,256.3 L338.1,256.0 L338.8,256.1 L339.5,255.4 L340.2,254.0 L340.9,254.1 L341.6,254.1 L342.3,256.0 L343.0,254.4 L343.7,256.6 L344.4,254.1 L345.1,254.3 L345.8,255.7 L346.5,255.3 L347.2,256.3 L347.9,256.3 L348.6,254.1 L349.3,255.3 L350.0,256.8 L350.7,255.2 L351.4,254.7 L352.1,255.0 L352.8,254.0 L353.5,255.8 L354.2,254.8 L354.9,254.3 L355.6,254.9 L356.3,254.3 L357.0,254.0 L357.7,254.6 L358.4,254.3 L359.1,256.7 L359.8,253.8 L360.5,255.6 L361.2,253.9 L361.9,255.1 L362.6,256.7 L363.3,256.1 L364.0,254.0 L364.7,256.1 L365.4,255.6 L366.1,256.2 L366.8,254.5 L367.5,256.4 L368.2,254.7 L368.9,255.4 L369.6,255.1 L370.3,255.5 L371.0,254.1 L371.7,256.5 L372.4,255.7 L373.1,254.0 L373.8,255.7 L374.5,254.6 L375.2,256.7 L375.9,255.5 L376.6,255.8 L377.3,256.3 L378.0,254.8 L378.7,255.1 L379.4,253.9 L380.1,256.4 L380.8,256.6 L381.5,255.3 L382.2,255.7 L382.9,255.7 L383.6,256.1 L384.3,256.3 L385.0,255.8 L385.7,254.2 L386.4,256.4 L387.1,255.5 L387.8,255.1 L388.5,254.1 L389.2,256.4 L389.9,253.9 L390.6,254.8 L391.3,256.2 L392.0,254.6 L392.7,255.1 L393.4,256.1 L394.1,255.3 L394.8,254.2 L395.5,254.3 L396.2,254.8 L396.9,255.3 L397.6,255.3 L398.3,255.0 L399.0,253.9 L399.7,256.5 L400.4,256.7 L401.1,254.7 L401.8,254.0 L402.5,255.2 L403.2,256.0 L403.9,255.7 L404.6,254.8 L405.3,254.6 L406.0,256.4 L406.7,256.4 L407.4,254.4 L408.1,254.3 L408.8,256.2 L409.5,255.6 L410.2,256.6 L410.9,255.8 L411.6,253.8 L412.3,255.3 L413.0,254.2 L413.7,255.4 L414.4,256.2 L415.1,256.7 L415.8,256.4 L416.5,256.1 L417.2,256.3 L417.9,255.0 L418.6,255.1 L419.3,255.4 L420.0,256.6 L420.7,254.2 L421.4,254.9 L422.1,253.8 L422.8,254.4 L423.5,254.7 L424.2,253.8 L424.9,254.9 L425.6,254.5 L426.3,254.4 L427.0,256.5 L427.7,256.1 L428.4,256.6 L429.1,256.3 L429.8,256.6 L430.5,256.3 L431.2,255.8 L431.9,255.0 L432.6,254.2 L433.3,256.4 L434.0,254.3 L434.7,254.6 L435.4,253.9 L436.1,256.7 L436.8,255.5 L437.5,256.1 L438.2,255.7 L438.9,256.8 L439.6,255.0 L440.3,256.5 L441.0,255.1 L441.7,256.6 L442.4,255.8 L443.1,256.0 L443.8,256.4 L444.5,254.1 L445.2,254.0 L445.9,255.1 L446.6,256.0 L447.3,255.4 L448.0,254.5 L448.7,254.0 L449.4,255.6 L450.1,256.5 L450.8,254.0 L451.5,255.8 L452.2,254.8 L452.9,256.2 L453.6,254.6 L454.3,255.9 L455.0,256.6 L455.7,255.1 L456.4,253.9 L457.1,256.0 L457.8,255.1 L458.5,255.2 L459.2,255.2 L459.9,254.5 L460.6,255.2 L461.3,255.7 L462.0,256.7 L462.7,255.9 L463.4,255.7 L464.1,255.1 L464.8,255.0 L465.5,254.7 L466.2,253.9 L466.9,254.5 L467.6,254.3 L468.3,254.8 L469.0,255.2 L469.7,255.7 L470.4,255.1 L471.1,255.8 L471.8,256.8 L472.5,256.3 L473.2,254.5 L473.9,256.4 L474.6,256.2 L475.3,253.8 L476.0,256.5 L476.7,256.2 L477.4,255.7 L478.1,255.0 L478.8,254.2 L479.5,255.5 L480.2,253.9 L480.9,254.5 L481.6,255.3 L482.3,255.0 L483.0,254.7 L483.7,254.9 L484.4,254.8 L485.1,255.9 L485.8,254.1 L486.5,256.0 L487.2,254.9 L487.9,255.6 L488.6,255.6 L489.3,255.3 L490.0,256.8 L490.7,254.2 L491.4,255.9 L492.1,255.2 L492.8,255.1 L493.5,254.1 L494.2,254.9 L494.9,254.7 L495.6,255.1 L496.3,256.2 L497.0,255.3 L497.7,255.9 L498.4,255.3 L499.1,255.5 L499.8,255.0 L500.5,256.4 L501.2,256.1 L501.9,254.9 L502.6,253.9 L503.3,254.5 L504.0,255.5 L504.7,256.6 L505.4,256.7 L506.1,255.3 L506.8,256.2 L507.5,254.5 L508.2,255.9 L508.9,255.8 L509.6,256.4 L510.3,256.2 L511.0,256.2 L511.7,255.5 L512.4,255.4 L513.1,255.5 L513.8,255.1 L514.5,254.4 L515.2,256.6 L515.9,254.4 L516.6,256.3 L517.3,256.8 L518.0,255.0 L518.7,256.1 L519.4,254.5 L520.1,254.3 L520.8,256.4 L521.5,254.5 L522.2,256.5 L522.9,255.8 L523.6,256.1 L524.3,254.2 L525.0,254.3 L525.7,254.0 L526.4,255.3 L527.1,254.9 L527.8,254.3 L528.5,254.7 L529.2,253.9 L529.9,254.3 L530.6,254.4 L531.3,255.3 L532.0,255.5 L532.7,255.5 L533.4,254.4 L534.1,255.7 L534.8,255.3 L535.5,256.3 L536.2,254.1 L536.9,256.2 L537.6,256.7 L538.3,254.6 L539.0,255.5 L539.7,254.0 L540.4,254.8 L541.1,256.1 L541.8,255.5 L542.5,254.3 L543.2,255.2 L543.9,255.2 L544.6,256.5 L545.3,254.6 L546.0,256.4 L546.7,255.9 L547.4,256.5 L548.1,255.9 L548.8,255.3 L549.5,256.2 L550.2,255.1 L550.9,256.4 L551.6,256.6 L552.3,256.5 L553.0,256.5 L553.7,254.4 L554.4,255.8 L555.1,254.4 L555.8,255.5 L556.5,256.1 L557.2,256.5 L557.9,254.3 L558.6,255.8 L559.3,253.9 L560.0,255.6 L560.7,254.7 L561.4,256.5 L562.1,254.2 L562.8,254.3 L563.5,255.8 L564.2,253.9 L564.9,254.5 L565.6,254.5 L566.3,256.5 L567.0,256.3 L567.7,253.9 L568.4,254.5 L569.1,254.7 L569.8,255.0 L570.5,255.3 L571.2,256.8 L571.9,256.7 L572.6,255.0 L573.3,254.4 L574.0,256.5 L574.7,255.2 L575.4,256.6 L576.1,256.7 L576.8,255.7 L577.5,254.6 L578.2,254.5 L578.9,256.0 L579.6,254.3 L580.3,255.8 L581.0,254.4 L581.7,254.4 L582.4,256.1 L583.1,254.1 L583.8,255.1 L584.5,256.8 L585.2,254.6 L585.9,253.8 L586.6,254.3 L587.3,255.0 L588.0,256.4 L588.7,255.7 L589.4,256.6 L590.1,254.9 L590.8,256.8 L591.5,254.6 L592.2,254.0 L592.9,254.4 L593.6,255.6 L594.3,256.4 L595.0,255.9 L595.7,256.1 L596.4,255.8 L597.1,255.2 L597.8,256.3 L598.5,255.7 L599.2,255.2 L599.9,255.9 L600.6,256.1 L601.3,254.1 L602.0,255.5 L602.7,253.9 L603.4,256.6 L604.1,254.5 L604.8,254.0 L605.5,254.8 L606.2,256.7 L606.9,254.9 L607.6,255.0 L608.3,254.0 L609.0,253.9 L609.7,254.5 L610.4,256.0 L611.1,254.7 L611.8,256.6 L612.5,254.3 L613.2,254.3 L613.9,256.6 L614.6,255.8 L615.3,254.1 L616.0,254.7 L616.7,254.5 L616.7,265.4 L616.0,263.0 L615.3,265.5 L614.6,264.1 L613.9,263.1 L613.2,265.8 L612.5,264.0 L611.8,263.7 L611.1,264.5 L610.4,263.3 L609.7,265.1 L609.0,263.0 L608.3,266.0 L607.6,264.6 L606.9,265.2 L606.2,265.2 L605.5,264.5 L604.8,265.3 L604.1,265.9 L603.4,265.9 L602.7,265.6 L602.0,263.7 L601.3,263.4 L600.6,265.2 L599.9,263.5 L599.2,265.7 L598.5,263.2 L597.8,265.7 L597.1,265.0 L596.4,265.4 L595.7,264.9 L595.0,263.7 L594.3,263.7 L593.6,264.4 L592.9,265.4 L592.2,265.9 L591.5,265.4 L590.8,264.0 L590.1,265.9 L589.4,263.8 L588.7,265.9 L588.0,265.5 L587.3,265.5 L586.6,263.7 L585.9,263.1 L585.2,263.6 L584.5,264.5 L583.8,265.5 L583.1,264.5 L582.4,264.1 L581.7,264.5 L581.0,263.5 L580.3,265.5 L579.6,265.4 L578.9,264.0 L578.2,265.7 L577.5,265.6 L576.8,264.9 L576.1,265.1 L575.4,264.7 L574.7,265.0 L574.0,264.1 L573.3,263.6 L572.6,265.6 L571.9,265.1 L571.2,264.4 L570.5,264.4 L569.8,265.1 L569.1,263.3 L568.4,263.1 L567.7,266.0 L567.0,264.9 L566.3,264.9 L565.6,263.2 L564.9,264.5 L564.2,264.5 L563.5,264.4 L562.8,265.1 L562.1,264.1 L561.4,265.0 L560.7,264.0 L560.0,265.7 L559.3,264.6 L558.6,264.0 L557.9,263.2 L557.2,264.2 L556.5,265.0 L555.8,264.3 L555.1,265.5 L554.4,263.8 L553.7,264.3 L553.0,263.6 L552.3,263.0 L551.6,264.6 L550.9,265.7 L550.2,263.7 L549.5,265.4 L548.8,265.4 L548.1,263.1 L547.4,264.5 L546.7,263.6 L546.0,265.4 L545.3,263.2 L544.6,264.6 L543.9,264.6 L543.2,263.9 L542.5,265.8 L541.8,263.8 L541.1,264.9 L540.4,263.1 L539.7,263.3 L539.0,263.1 L538.3,265.0 L537.6,263.9 L536.9,264.0 L536.2,265.0 L535.5,263.4 L534.8,264.3 L534.1,265.0 L533.4,263.8 L532.7,265.1 L532.0,264.5 L531.3,265.8 L530.6,265.5 L529.9,263.3 L529.2,263.8 L528.5,263.9 L527.8,265.1 L527.1,264.2 L526.4,265.5 L525.7,263.6 L525.0,265.5 L524.3,265.1 L523.6,265.0 L522.9,264.8 L522.2,264.1 L521.5,265.7 L520.8,263.8 L520.1,264.0 L519.4,265.8 L518.7,263.7 L518.0,263.5 L517.3,264.0 L516.6,264.8 L515.9,264.7 L515.2,263.4 L514.5,265.9 L513.8,263.9 L513.1,264.8 L512.4,264.0 L511.7,265.1 L511.0,263.4 L510.3,263.9 L509.6,265.9 L508.9,263.5 L508.2,265.8 L507.5,264.1 L506.8,263.2 L506.1,264.4 L505.4,265.2 L504.7,264.0 L504.0,264.6 L503.3,265.6 L502.6,265.9 L501.9,265.3 L501.2,263.5 L500.5,263.5 L499.8,265.5 L499.1,265.0 L498.4,264.7 L497.7,264.0 L497.0,265.5 L496.3,265.4 L495.6,265.0 L494.9,265.8 L494.2,264.6 L493.5,265.9 L492.8,264.6 L492.1,265.9 L491.4,263.4 L490.7,265.5 L490.0,263.9 L489.3,265.2 L488.6,263.5 L487.9,265.9 L487.2,265.4 L486.5,263.4 L485.8,265.1 L485.1,264.0 L484.4,265.8 L483.7,263.5 L483.0,265.8 L482.3,265.3 L481.6,265.2 L480.9,264.6 L480.2,265.0 L479.5,265.2 L478.8,263.5 L478.1,265.6 L477.4,264.9 L476.7,263.6 L476.0,264.1 L475.3,265.9 L474.6,264.8 L473.9,264.4 L473.2,264.9 L472.5,263.4 L471.8,265.4 L471.1,264.1 L470.4,264.5 L469.7,264.4 L469.0,264.9 L468.3,264.4 L467.6,263.9 L466.9,264.2 L466.2,264.0 L465.5,264.3 L464.8,265.7 L464.1,264.3 L463.4,263.7 L462.7,264.6 L462.0,263.0 L461.3,265.7 L460.6,264.8 L459.9,265.2 L459.2,265.1 L458.5,264.8 L457.8,264.1 L457.1,263.3 L456.4,264.6 L455.7,263.6 L455.0,265.5 L454.3,263.9 L453.6,263.3 L452.9,264.8 L452.2,264.2 L451.5,265.2 L450.8,265.0 L450.1,263.9 L449.4,265.8 L448.7,265.2 L448.0,264.7 L447.3,264.9 L446.6,263.4 L445.9,265.8 L445.2,264.3 L444.5,264.9 L443.8,264.4 L443.1,265.8 L442.4,263.7 L441.7,265.1 L441.0,263.5 L440.3,264.2 L439.6,265.7 L438.9,265.1 L438.2,263.5 L437.5,266.0 L436.8,265.1 L436.1,265.1 L435.4,265.1 L434.7,263.3 L434.0,265.4 L433.3,264.1 L432.6,264.6 L431.9,263.8 L431.2,263.8 L430.5,263.5 L429.8,263.5 L429.1,265.4 L428.4,265.7 L427.7,264.3 L427.0,265.0 L426.3,263.5 L425.6,265.8 L424.9,265.4 L424.2,265.1 L423.5,265.5 L422.8,264.6 L422.1,263.6 L421.4,264.1 L420.7,263.7 L420.0,263.1 L419.3,265.1 L418.6,264.5 L417.9,263.6 L417.2,265.6 L416.5,265.7 L415.8,264.7 L415.1,263.5 L414.4,264.4 L413.7,264.9 L413.0,264.4 L412.3,265.2 L411.6,264.3 L410.9,266.0 L410.2,265.4 L409.5,264.9 L408.8,265.3 L408.1,265.4 L407.4,264.1 L406.7,263.1 L406.0,263.5 L405.3,266.0 L404.6,263.1 L403.9,264.2 L403.2,265.5 L402.5,263.1 L401.8,265.0 L401.1,263.2 L400.4,264.0 L399.7,265.9 L399.0,265.0 L398.3,265.0 L397.6,263.2 L396.9,264.3 L396.2,264.6 L395.5,263.4 L394.8,263.6 L394.1,263.3 L393.4,264.5 L392.7,263.5 L392.0,263.1 L391.3,264.2 L390.6,265.7 L389.9,264.7 L389.2,265.4 L388.5,264.6 L387.8,264.0 L387.1,264.5 L386.4,263.0 L385.7,265.3 L385.0,265.7 L384.3,265.0 L383.6,263.6 L382.9,265.9 L382.2,265.9 L381.5,263.7 L380.8,263.3 L380.1,264.8 L379.4,264.0 L378.7,264.9 L378.0,263.4 L377.3,264.8 L376.6,265.4 L375.9,263.3 L375.2,264.1 L374.5,265.6 L373.8,265.8 L373.1,264.6 L372.4,263.2 L371.7,264.1 L371.0,263.0 L370.3,263.9 L369.6,264.1 L368.9,263.4 L368.2,263.3 L367.5,263.3 L366.8,266.0 L366.1,265.5 L365.4,265.2 L364.7,265.4 L364.0,264.8 L363.3,265.2 L362.6,264.8 L361.9,265.7 L361.2,265.0 L360.5,264.0 L359.8,264.2 L359.1,264.1 L358.4,264.3 L357.7,264.3 L357.0,266.0 L356.3,263.7 L355.6,264.8 L354.9,265.6 L354.2,263.3 L353.5,264.7 L352.8,264.8 L352.1,263.7 L351.4,265.0 L350.7,265.2 L350.0,263.1 L349.3,264.0 L348.6,263.1 L347.9,264.7 L347.2,264.1 L346.5,264.3 L345.8,265.5 L345.1,265.4 L344.4,263.1 L343.7,265.9 L343.0,264.5 L342.3,263.5 L341.6,263.8 L340.9,265.6 L340.2,264.9 L339.5,264.8 L338.8,264.7 L338.1,265.8 L337.4,265.3 L336.7,266.0 L336.0,263.4 L335.3,265.3 L334.6,264.6 L333.9,264.2 L333.2,265.4 L332.5,265.4 L331.8,263.5 L331.1,265.9 L330.4,265.0 L329.7,264.1 L329.0,263.7 L328.3,264.7 L327.6,264.3 L326.9,263.6 L326.2,263.2 L325.5,264.0 L324.8,264.5 L324.1,264.0 L323.4,263.3 L322.7,264.9 L322.0,264.3 L321.3,265.0 L320.6,263.3 L319.9,265.1 L319.2,264.6 L318.5,265.1 L317.8,264.8 L317.1,265.3 L316.4,265.3 L315.7,264.1 L315.0,264.7 L314.3,265.3 L313.6,264.0 L312.9,263.3 L312.2,264.8 L311.5,265.8 L310.8,264.3 L310.1,264.7 L309.4,264.8 L308.7,265.2 L308.0,263.9 L307.3,265.5 L306.6,263.5 L305.9,265.5 L305.2,263.6 L304.5,264.3 L303.8,263.8 L303.1,265.3 L302.4,265.6 L301.7,263.3 L301.0,265.3 L300.3,263.1 L299.6,264.5 L298.9,265.5 L298.2,264.3 L297.5,263.7 L296.8,264.7 L296.1,265.5 L295.4,264.1 L294.7,264.7 L294.0,265.2 L293.3,265.0 L292.6,263.6 L291.9,264.8 L291.2,266.0 L290.5,263.6 L289.8,265.6 L289.1,264.9 L288.4,263.3 L287.7,265.9 L287.0,263.4 L286.3,263.2 L285.6,265.5 L284.9,265.2 L284.2,263.9 L283.5,264.8 L282.8,264.0 L282.1,265.9 L281.4,264.3 L280.7,265.9 L280.0,264.9 L279.3,264.2 L278.6,263.5 L277.9,265.6 L277.2,263.6 L276.5,264.4 L275.8,265.8 L275.1,264.8 L274.4,264.2 L273.7,263.1 L273.0,265.2 L272.3,263.3 L271.6,263.9 L270.9,263.6 L270.2,263.3 L269.5,264.9 L268.8,264.9 L268.1,266.0 L267.4,264.1 L266.7,264.5 L266.0,265.0 L265.3,264.5 L264.6,263.4 L263.9,265.4 L263.2,263.7 L262.5,263.8 L261.8,265.5 L261.1,264.4 L260.4,265.5 L259.7,265.6 L259.0,265.6 L258.3,263.4 L257.6,264.8 L256.9,263.4 L256.2,265.5 L255.5,265.5 L254.8,265.3 L254.1,264.1 L253.4,263.4 L252.7,263.0 L252.0,265.5 L251.3,263.2 L250.6,264.4 L249.9,265.4 L249.2,264.2 L248.5,264.4 L247.8,265.0 L247.1,263.1 L246.4,264.0 L245.7,265.2 L245.0,264.6 L244.3,264.3 L243.6,263.4 L242.9,264.6 L242.2,264.8 L241.5,265.5 L240.8,263.7 L240.1,265.6 L239.4,265.3 L238.7,263.5 L238.0,265.8 L237.3,264.8 L236.6,263.9 L235.9,265.0 L235.2,265.6 L234.5,266.0 L233.8,263.1 L233.1,265.8 L232.4,265.2 L231.7,263.1 L231.0,264.5 L230.3,264.8 L229.6,265.2 L228.9,265.0 L228.2,263.4 L227.5,264.5 L226.8,265.0 L226.1,265.4 L225.4,264.0 L224.7,264.0 L224.0,264.5 L223.3,263.4 L222.6,263.4 L221.9,264.8 L221.2,263.0 L220.5,264.2 L219.8,266.0 L219.1,265.3 L218.4,264.5 L217.7,263.7 L217.0,263.7 L216.3,264.4 L215.6,265.9 L214.9,263.3 L214.2,264.4 L213.5,265.6 L212.8,264.2 L212.1,264.7 L211.4,263.1 L210.7,265.1 L210.0,264.9 L209.3,264.6 L208.6,263.3 L207.9,263.6 L207.2,265.5 L206.5,265.2 L205.8,263.3 L205.1,264.4 L204.4,265.4 L203.7,263.9 L203.0,263.3 L202.3,263.9 L201.6,263.2 L200.9,263.4 L200.2,265.1 L199.5,265.6 L198.8,264.0 L198.1,264.8 L197.4,265.5 L196.7,265.3 L196.0,264.9 L195.3,263.9 L194.6,264.4 L193.9,263.4 L193.2,263.8 L192.5,265.5 L191.8,263.7 L191.1,264.1 L190.4,263.2 L189.7,265.6 L189.0,265.6 L188.3,265.7 L187.6,263.2 L186.9,264.4 L186.2,263.6 L185.5,264.4 L184.8,264.4 L184.1,264.6 L183.4,265.5 L182.7,263.1 L182.0,264.1 L181.3,264.0 L180.6,264.1 L179.9,263.2 L179.2,263.2 L178.5,263.7 L177.8,265.8 L177.1,263.2 L176.4,265.8 L175.7,263.8 L175.0,264.6 L174.3,264.8 L173.6,264.3 L172.9,264.6 L172.2,264.6 L171.5,263.4 L170.8,265.8 L170.1,263.2 L169.4,265.8 L168.7,264.5 L168.0,264.8 L167.3,265.1 L166.6,263.8 L165.9,263.3 L165.2,265.7 L164.5,264.7 L163.8,264.3 L163.1,265.9 L162.4,264.1 L161.7,266.0 L161.0,263.7 L160.3,265.0 L159.6,263.1 L158.9,265.8 L158.2,264.9 L157.5,264.1 L156.8,263.2 L156.1,263.7 L155.4,265.5 L154.7,265.2 L154.0,264.2 L153.3,263.1 L152.6,265.1 L151.9,263.6 L151.2,264.0 L150.5,263.4 L149.8,264.3 L149.1,264.5 L148.4,263.2 L147.7,264.2 L147.0,265.0 L146.3,264.1 L145.6,263.7 L144.9,264.5 L144.2,263.8 L143.5,264.9 L142.8,265.6 L142.1,264.8 L141.4,263.3 L140.7,263.8 L140.0,265.2 L139.3,265.6 L138.6,264.1 L137.9,266.0 L137.2,265.3 L136.5,263.5 L135.8,265.1 L135.1,266.0 L134.4,265.2 L133.7,265.0 L133.0,264.2 L132.3,265.0 L131.6,265.5 L130.9,264.8 L130.2,263.4 L129.5,265.7 L128.8,263.1 L128.1,265.0 L127.4,263.9 L126.7,264.4 L126.0,265.8 L125.3,265.8 L124.6,265.9 L123.9,263.1 L123.2,265.0 L122.5,264.4 L121.8,264.1 L121.1,265.2 L120.4,265.8 L119.7,265.3 L119.0,264.1 L118.3,264.2 L117.6,264.2 L116.9,265.8 L116.2,265.7 L115.5,265.1 L114.8,264.9 L114.1,265.1 L113.4,264.7 L112.7,263.7 L112.0,264.9 L111.3,265.6 L110.6,263.6 L109.9,265.1 L109.2,263.0 L108.5,265.1 L107.8,263.1 L107.1,264.4 L106.4,263.6 L105.7,264.8 L105.0,265.4 L104.3,264.7 L103.6,265.9 L102.9,264.5 L102.2,265.2 L101.5,263.8 L100.8,264.1 L100.1,264.7 L99.4,264.8 L98.7,264.7 L98.0,264.9 L97.3,263.9 L96.6,265.8 L95.9,263.9 L95.2,263.7 L94.5,263.6 L93.8,264.4 L93.1,264.5 L92.4,265.7 L91.7,264.5 L91.0,264.3 L90.3,265.9 L89.6,263.7 L88.9,263.9 L88.2,264.5 L87.5,263.4 L86.8,263.5 L86.1,264.1 L85.4,264.4 L84.7,265.0 L84.0,263.9 L83.3,265.9 L82.6,264.0 L81.9,265.5 L81.2,265.0 L80.5,264.3 L79.8,265.3 L79.1,265.1 L78.4,265.2 L77.7,263.3 L77.0,265.1 L76.3,264.9 L75.6,263.5 L74.9,264.8 L74.2,263.0 L73.5,263.6 L72.8,265.7 L72.1,264.1 L71.4,263.2 L70.7,264.3 L70.0,264.0 L69.3,263.8 L68.6,264.8 L67.9,264.8 L67.2,265.2 L66.5,263.7 L65.8,265.3 L65.1,263.3 L64.4,264.2 L63.7,264.2 L63.0,264.8 L62.3,263.5 L61.6,265.8 L60.9,263.7 L60.2,264.1 L59.5,264.8 L58.8,264.5 L58.1,265.2 L57.4,263.0 L56.7,263.3 L56.0,265.5 L55.3,263.1 L54.6,264.8 L53.9,264.2 L53.2,265.6 L52.5,263.5 L51.8,265.3Z" fill="#b6c190"/>
<path d="M52.20,265.9 L52.80,253.7 L53.40,259.9 L54.00,256.3 L54.60,256.5 L55.20,257.2 L55.80,258.3 L56.40,266.2 L57.00,255.5 L57.60,267.2 L58.20,263.1 L58.80,254.6 L59.40,257.1 L60.00,264.4 L60.60,254.1 L61.20,258.6 L61.80,267.3 L62.40,260.3 L63.00,263.6 L63.60,255.0 L64.20,267.1 L64.80,260.6 L65.40,265.1 L66.00,259.0 L66.60,266.1 L67.20,265.8 L67.80,256.2 L68.40,259.9 L69.00,261.9 L69.60,267.6 L70.20,267.3 L70.80,259.4 L71.40,264.0 L72.00,255.7 L72.60,264.9 L73.20,255.3 L73.80,254.7 L74.40,268.0 L75.00,261.4 L75.60,261.8 L76.20,258.9 L76.80,254.3 L77.40,267.8 L78.00,255.4 L78.60,262.0 L79.20,262.9 L79.80,258.2 L80.40,263.7 L81.00,266.8 L81.60,267.9 L82.20,267.6 L82.80,253.9 L83.40,266.0 L84.00,257.9 L84.60,261.9 L85.20,255.0 L85.80,265.2 L86.40,266.1 L87.00,265.3 L87.60,261.7 L88.20,268.0 L88.80,262.3 L89.40,261.6 L90.00,258.8 L90.60,257.1 L91.20,256.0 L91.80,265.0 L92.40,256.0 L93.00,254.0 L93.60,254.6 L94.20,264.1 L94.80,257.9 L95.40,265.4 L96.00,255.8 L96.60,260.4 L97.20,264.0 L97.80,265.9 L98.40,254.1 L99.00,266.3 L99.60,266.5 L100.20,255.2 L100.80,255.5 L101.40,268.0 L102.00,257.4 L102.60,255.0 L103.20,256.1 L103.80,266.6 L104.40,255.2 L105.00,266.5 L105.60,266.1 L106.20,262.4 L106.80,256.0 L107.40,261.5 L108.00,255.5 L108.60,268.2 L109.20,254.9 L109.80,257.8 L110.40,254.6 L111.00,265.9 L111.60,266.4 L112.20,261.1 L112.80,265.4 L113.40,258.6 L114.00,258.7 L114.60,254.3 L115.20,264.6 L115.80,260.3 L116.40,254.0 L117.00,258.5 L117.60,264.7 L118.20,255.6 L118.80,261.7 L119.40,257.9 L120.00,263.7 L120.60,257.8 L121.20,253.8 L121.80,255.7 L122.40,259.9 L123.00,263.5 L123.60,266.0 L124.20,260.1 L124.80,264.6 L125.40,255.6 L126.00,265.0 L126.60,263.2 L127.20,262.7 L127.80,255.5 L128.40,260.2 L129.00,266.5 L129.60,268.1 L130.20,265.4 L130.80,259.9 L131.40,259.4 L132.00,260.3 L132.60,258.6 L133.20,263.9 L133.80,261.4 L134.40,254.2 L135.00,254.9 L135.60,256.2 L136.20,264.4 L136.80,254.0 L137.40,254.4 L138.00,268.3 L138.60,267.5 L139.20,264.5 L139.80,255.7 L140.40,261.3 L141.00,259.9 L141.60,264.7 L142.20,266.4 L142.80,259.2 L143.40,255.8 L144.00,258.3 L144.60,257.2 L145.20,268.0 L145.80,263.3 L146.40,254.3 L147.00,255.0 L147.60,260.6 L148.20,261.0 L148.80,256.0 L149.40,265.8 L150.00,253.8 L150.60,257.2 L151.20,258.8 L151.80,261.9 L152.40,259.0 L153.00,254.7 L153.60,261.7 L154.20,260.7 L154.80,263.3 L155.40,255.6 L156.00,261.7 L156.60,262.1 L157.20,264.9 L157.80,254.2 L158.40,254.0 L159.00,257.2 L159.60,262.3 L160.20,265.5 L160.80,267.5 L161.40,266.1 L162.00,259.2 L162.60,259.0 L163.20,255.0 L163.80,265.0 L164.40,254.9 L165.00,254.8 L165.60,256.6 L166.20,258.7 L166.80,264.5 L167.40,261.3 L168.00,256.2 L168.60,262.0 L169.20,256.2 L169.80,255.9 L170.40,257.8 L171.00,265.4 L171.60,259.2 L172.20,267.8 L172.80,266.0 L173.40,267.1 L174.00,265.6 L174.60,262.6 L175.20,265.2 L175.80,263.0 L176.40,261.8 L177.00,265.6 L177.60,265.6 L178.20,253.9 L178.80,265.8 L179.40,254.0 L180.00,262.2 L180.60,260.0 L181.20,256.1 L181.80,266.8 L182.40,255.0 L183.00,261.7 L183.60,267.0 L184.20,264.0 L184.80,256.6 L185.40,263.0 L186.00,255.7 L186.60,255.6 L187.20,255.8 L187.80,259.1 L188.40,257.4 L189.00,256.9 L189.60,255.5 L190.20,254.4 L190.80,267.7 L191.40,254.1 L192.00,253.8 L192.60,262.4 L193.20,258.9 L193.80,255.8 L194.40,256.6 L195.00,266.8 L195.60,256.0 L196.20,264.6 L196.80,257.9 L197.40,263.8 L198.00,255.9 L198.60,264.1 L199.20,266.9 L199.80,261.9 L200.40,263.1 L201.00,266.3 L201.60,254.0 L202.20,254.2 L202.80,258.5 L203.40,256.4 L204.00,259.1 L204.60,262.8 L205.20,261.4 L205.80,265.6 L206.40,268.0 L207.00,256.3 L207.60,260.0 L208.20,259.9 L208.80,261.8 L209.40,257.2 L210.00,256.8 L210.60,258.2 L211.20,257.3 L211.80,256.7 L212.40,256.1 L213.00,255.1 L213.60,260.9 L214.20,264.2 L214.80,257.1 L215.40,262.7 L216.00,267.0 L216.60,267.1 L217.20,254.7 L217.80,267.9 L218.40,254.7 L219.00,261.4 L219.60,254.5 L220.20,262.8 L220.80,261.1 L221.40,262.4 L222.00,264.7 L222.60,259.2 L223.20,263.2 L223.80,261.3 L224.40,266.7 L225.00,257.0 L225.60,268.1 L226.20,257.7 L226.80,264.7 L227.40,267.9 L228.00,261.1 L228.60,255.2 L229.20,261.5 L229.80,267.3 L230.40,262.8 L231.00,257.7 L231.60,253.7 L232.20,267.1 L232.80,260.1 L233.40,267.1 L234.00,261.8 L234.60,255.8 L235.20,259.1 L235.80,259.1 L236.40,262.5 L237.00,257.9 L237.60,259.4 L238.20,260.2 L238.80,254.7 L239.40,260.5 L240.00,263.5 L240.60,264.3 L241.20,262.6 L241.80,254.8 L242.40,262.2 L243.00,267.8 L243.60,254.8 L244.20,257.1 L244.80,255.8 L245.40,257.9 L246.00,255.1 L246.60,266.2 L247.20,255.9 L247.80,267.9 L248.40,254.2 L249.00,265.0 L249.60,266.2 L250.20,261.1 L250.80,258.8 L251.40,255.9 L252.00,260.9 L252.60,255.2 L253.20,264.7 L253.80,267.8 L254.40,264.0 L255.00,265.1 L255.60,260.0 L256.20,254.9 L256.80,256.2 L257.40,259.9 L258.00,267.2 L258.60,259.6 L259.20,258.0 L259.80,257.8 L260.40,267.8 L261.00,265.2 L261.60,260.1 L262.20,259.7 L262.80,254.5 L263.40,254.8 L264.00,257.5 L264.60,261.7 L265.20,257.5 L265.80,261.5 L266.40,265.8 L267.00,259.3 L267.60,259.9 L268.20,265.0 L268.80,266.3 L269.40,262.3 L270.00,258.5 L270.60,256.9 L271.20,267.6 L271.80,268.1 L272.40,266.3 L273.00,263.6 L273.60,262.5 L274.20,263.9 L274.80,265.3 L275.40,257.7 L276.00,259.0 L276.60,262.8 L277.20,261.7 L277.80,260.8 L278.40,262.7 L279.00,259.1 L279.60,263.4 L280.20,267.9 L280.80,267.4 L281.40,267.9 L282.00,256.4 L282.60,259.4 L283.20,259.4 L283.80,263.4 L284.40,260.4 L285.00,259.7 L285.60,264.4 L286.20,266.9 L286.80,267.0 L287.40,262.2 L288.00,258.0 L288.60,259.5 L289.20,266.2 L289.80,261.9 L290.40,267.1 L291.00,260.2 L291.60,253.9 L292.20,262.0 L292.80,260.0 L293.40,260.1 L294.00,264.5 L294.60,261.7 L295.20,261.8 L295.80,264.8 L296.40,261.8 L297.00,259.4 L297.60,263.2 L298.20,258.2 L298.80,255.1 L299.40,260.6 L300.00,257.0 L300.60,254.6 L301.20,256.1 L301.80,258.5 L302.40,254.6 L303.00,262.2 L303.60,266.9 L304.20,266.8 L304.80,253.8 L305.40,264.8 L306.00,264.9 L306.60,266.4 L307.20,265.5 L307.80,266.9 L308.40,259.9 L309.00,260.7 L309.60,257.1 L310.20,255.6 L310.80,262.7 L311.40,263.2 L312.00,262.3 L312.60,260.5 L313.20,262.3 L313.80,254.9 L314.40,260.0 L315.00,263.5 L315.60,255.4 L316.20,260.0 L316.80,260.8 L317.40,265.6 L318.00,262.9 L318.60,261.1 L319.20,255.8 L319.80,256.7 L320.40,268.2 L321.00,266.4 L321.60,264.1 L322.20,263.3 L322.80,264.5 L323.40,255.7 L324.00,255.6 L324.60,266.0 L325.20,266.0 L325.80,264.8 L326.40,265.0 L327.00,266.8 L327.60,267.5 L328.20,255.1 L328.80,262.7 L329.40,259.1 L330.00,255.3 L330.60,254.4 L331.20,257.4 L331.80,261.4 L332.40,261.2 L333.00,265.5 L333.60,263.3 L334.20,254.0 L334.80,267.6 L335.40,254.2 L336.00,265.3 L336.60,257.2 L337.20,262.9 L337.80,254.5 L338.40,262.7 L339.00,260.0 L339.60,265.9 L340.20,260.8 L340.80,266.0 L341.40,258.1 L342.00,259.5 L342.60,267.7 L343.20,266.8 L343.80,255.2 L344.40,259.7 L345.00,266.5 L345.60,267.5 L346.20,264.3 L346.80,254.6 L347.40,265.2 L348.00,255.6 L348.60,256.1 L349.20,267.6 L349.80,260.7 L350.40,265.5 L351.00,268.2 L351.60,255.6 L352.20,260.8 L352.80,267.9 L353.40,266.0 L354.00,263.4 L354.60,256.9 L355.20,256.6 L355.80,262.9 L356.40,262.8 L357.00,262.5 L357.60,262.9 L358.20,263.9 L358.80,260.3 L359.40,266.4 L360.00,257.1 L360.60,267.2 L361.20,253.7 L361.80,261.0 L362.40,260.8 L363.00,261.8 L363.60,265.4 L364.20,266.1 L364.80,267.4 L365.40,264.7 L366.00,267.0 L366.60,260.8 L367.20,257.7 L367.80,267.9 L368.40,257.1 L369.00,263.5 L369.60,253.9 L370.20,261.5 L370.80,263.1 L371.40,267.9 L372.00,256.5 L372.60,264.0 L373.20,260.5 L373.80,268.2 L374.40,258.4 L375.00,266.6 L375.60,266.3 L376.20,268.3 L376.80,263.7 L377.40,258.1 L378.00,262.8 L378.60,267.7 L379.20,253.8 L379.80,258.5 L380.40,257.0 L381.00,258.1 L381.60,265.7 L382.20,254.6 L382.80,256.1 L383.40,258.5 L384.00,262.2 L384.60,261.4 L385.20,254.2 L385.80,263.2 L386.40,254.0 L387.00,258.0 L387.60,262.0 L388.20,265.4 L388.80,257.9 L389.40,256.6 L390.00,260.9 L390.60,266.1 L391.20,261.9 L391.80,258.8 L392.40,255.3 L393.00,260.0 L393.60,259.8 L394.20,259.7 L394.80,257.0 L395.40,261.4 L396.00,267.7 L396.60,267.4 L397.20,264.3 L397.80,257.9 L398.40,259.4 L399.00,254.6 L399.60,254.3 L400.20,263.9 L400.80,256.0 L401.40,258.6 L402.00,256.2 L402.60,257.3 L403.20,260.7 L403.80,256.0 L404.40,255.7 L405.00,266.2 L405.60,254.5 L406.20,258.3 L406.80,266.9 L407.40,268.3 L408.00,263.3 L408.60,257.0 L409.20,262.5 L409.80,253.9 L410.40,267.9 L411.00,258.9 L411.60,260.9 L412.20,260.0 L412.80,260.0 L413.40,264.6 L414.00,264.0 L414.60,265.8 L415.20,262.4 L415.80,260.8 L416.40,266.5 L417.00,254.8 L417.60,259.3 L418.20,267.2 L418.80,264.2 L419.40,266.8 L420.00,258.8 L420.60,262.9 L421.20,262.2 L421.80,263.3 L422.40,266.3 L423.00,255.7 L423.60,266.8 L424.20,265.4 L424.80,259.5 L425.40,254.8 L426.00,267.6 L426.60,260.3 L427.20,257.9 L427.80,258.2 L428.40,257.1 L429.00,259.5 L429.60,254.7 L430.20,259.0 L430.80,264.4 L431.40,257.7 L432.00,266.4 L432.60,262.1 L433.20,266.0 L433.80,267.8 L434.40,259.1 L435.00,255.9 L435.60,264.0 L436.20,265.7 L436.80,258.3 L437.40,259.0 L438.00,259.7 L438.60,258.9 L439.20,267.8 L439.80,261.9 L440.40,254.4 L441.00,263.4 L441.60,254.9 L442.20,265.0 L442.80,265.9 L443.40,265.4 L444.00,261.2 L444.60,256.6 L445.20,257.3 L445.80,256.5 L446.40,259.3 L447.00,255.0 L447.60,255.8 L448.20,264.3 L448.80,266.4 L449.40,268.1 L450.00,263.6 L450.60,266.0 L451.20,260.4 L451.80,264.7 L452.40,259.7 L453.00,267.1 L453.60,264.8 L454.20,263.8 L454.80,256.4 L455.40,259.2 L456.00,254.6 L456.60,257.8 L457.20,254.4 L457.80,261.4 L458.40,265.2 L459.00,265.3 L459.60,254.4 L460.20,257.8 L460.80,260.3 L461.40,256.9 L462.00,256.7 L462.60,267.7 L463.20,266.3 L463.80,267.3 L464.40,262.2 L465.00,266.4 L465.60,257.9 L466.20,262.3 L466.80,257.2 L467.40,258.2 L468.00,263.7 L468.60,255.0 L469.20,261.6 L469.80,268.0 L470.40,262.5 L471.00,267.0 L471.60,264.5 L472.20,257.6 L472.80,268.1 L473.40,255.3 L474.00,255.3 L474.60,261.1 L475.20,258.4 L475.80,258.2 L476.40,261.2 L477.00,266.0 L477.60,255.7 L478.20,257.7 L478.80,263.5 L479.40,253.8 L480.00,257.5 L480.60,267.4 L481.20,266.0 L481.80,255.5 L482.40,257.7 L483.00,263.3 L483.60,265.0 L484.20,262.1 L484.80,263.9 L485.40,260.9 L486.00,265.6 L486.60,266.5 L487.20,267.6 L487.80,257.7 L488.40,260.9 L489.00,266.5 L489.60,262.6 L490.20,265.1 L490.80,263.5 L491.40,257.4 L492.00,263.1 L492.60,257.0 L493.20,260.6 L493.80,258.3 L494.40,253.9 L495.00,260.7 L495.60,254.2 L496.20,265.5 L496.80,258.3 L497.40,257.9 L498.00,268.0 L498.60,257.5 L499.20,262.3 L499.80,260.0 L500.40,258.9 L501.00,256.6 L501.60,267.7 L502.20,261.5 L502.80,254.6 L503.40,259.2 L504.00,261.7 L504.60,262.8 L505.20,263.6 L505.80,267.4 L506.40,267.3 L507.00,253.7 L507.60,265.8 L508.20,257.5 L508.80,264.8 L509.40,259.9 L510.00,264.0 L510.60,257.5 L511.20,253.8 L511.80,256.1 L512.40,257.1 L513.00,261.2 L513.60,258.9 L514.20,259.6 L514.80,263.7 L515.40,255.8 L516.00,265.1 L516.60,261.9 L517.20,265.8 L517.80,258.5 L518.40,267.2 L519.00,257.5 L519.60,261.8 L520.20,256.4 L520.80,257.7 L521.40,254.5 L522.00,259.8 L522.60,267.3 L523.20,257.5 L523.80,262.0 L524.40,267.2 L525.00,266.3 L525.60,262.3 L526.20,257.9 L526.80,254.6 L527.40,263.1 L528.00,254.3 L528.60,256.8 L529.20,263.0 L529.80,262.3 L530.40,254.8 L531.00,267.2 L531.60,253.8 L532.20,268.0 L532.80,255.9 L533.40,260.7 L534.00,256.6 L534.60,255.8 L535.20,259.6 L535.80,256.7 L536.40,260.0 L537.00,261.5 L537.60,256.9 L538.20,262.6 L538.80,262.0 L539.40,263.2 L540.00,260.0 L540.60,256.3 L541.20,259.2 L541.80,267.8 L542.40,267.4 L543.00,260.6 L543.60,260.3 L544.20,266.7 L544.80,266.7 L545.40,267.3 L546.00,264.1 L546.60,264.9 L547.20,258.0 L547.80,259.4 L548.40,266.7 L549.00,263.8 L549.60,261.1 L550.20,258.9 L550.80,262.1 L551.40,262.9 L552.00,268.0 L552.60,267.2 L553.20,257.9 L553.80,256.1 L554.40,257.5 L555.00,260.6 L555.60,256.9 L556.20,266.3 L556.80,256.7 L557.40,267.5 L558.00,259.5 L558.60,261.2 L559.20,262.4 L559.80,257.9 L560.40,257.1 L561.00,259.8 L561.60,259.7 L562.20,267.5 L562.80,267.0 L563.40,268.2 L564.00,262.5 L564.60,264.1 L565.20,265.6 L565.80,264.6 L566.40,267.3 L567.00,266.8 L567.60,260.9 L568.20,254.8 L568.80,258.5 L569.40,257.4 L570.00,267.9 L570.60,260.8 L571.20,254.2 L571.80,255.5 L572.40,267.7 L573.00,263.9 L573.60,264.5 L574.20,265.6 L574.80,266.0 L575.40,264.9 L576.00,266.6 L576.60,263.4 L577.20,254.3 L577.80,255.5 L578.40,256.9 L579.00,255.4 L579.60,264.7 L580.20,260.1 L580.80,264.3 L581.40,263.6 L582.00,267.7 L582.60,257.9 L583.20,262.7 L583.80,265.3 L584.40,260.7 L585.00,263.0 L585.60,265.4 L586.20,253.9 L586.80,259.0 L587.40,265.9 L588.00,266.2 L588.60,256.0 L589.20,253.8 L589.80,265.9 L590.40,260.3 L591.00,263.5 L591.60,265.9 L592.20,258.9 L592.80,264.0 L593.40,259.0 L594.00,259.3 L594.60,259.8 L595.20,262.2 L595.80,267.3 L596.40,254.3 L597.00,267.7 L597.60,266.1 L598.20,262.4 L598.80,254.7 L599.40,260.4 L600.00,263.5 L600.60,267.1 L601.20,264.9 L601.80,259.1 L602.40,253.8 L603.00,254.3 L603.60,254.8 L604.20,254.3 L604.80,264.3 L605.40,267.4 L606.00,258.6 L606.60,268.1 L607.20,260.8 L607.80,256.3 L608.40,264.4 L609.00,265.0 L609.60,264.9 L610.20,260.2 L610.80,259.4 L611.40,264.3 L612.00,256.5 L612.60,261.0 L613.20,261.8 L613.80,268.0 L614.40,261.6 L615.00,263.3 L615.60,266.0 L616.20,255.6 L616.80,255.9" fill="none" stroke="#4a3ac4" stroke-width="0.5" stroke-opacity="0.15"/>
</svg>
<div class="xl" style="left:50.0px;transform:translateX(-50%)">0.5</div>
<div class="xl" style="left:106.8px;transform:translateX(-50%)">0.55</div>
<div class="xl" style="left:163.6px;transform:translateX(-50%)">0.6</div>
<div class="xl" style="left:220.4px;transform:translateX(-50%)">0.65</div>
<div class="xl" style="left:277.2px;transform:translateX(-50%)">0.7</div>
<div class="xl" style="left:334.0px;transform:translateX(-50%)">0.75</div>
<div class="xl" style="left:390.8px;transform:translateX(-50%)">0.8</div>
<div class="xl" style="left:447.6px;transform:translateX(-50%)">0.85</div>
<div class="xl" style="left:504.4px;transform:translateX(-50%)">0.9</div>
<div class="xl" style="left:561.2px;transform:translateX(-50%)">0.95</div>
<div class="xl" style="left:618.0px;transform:translateX(-50%)">1</div>

<!-- table -->
<div class="a" style="left:0;top:374px;width:641px;height:18px;background:#f0f7fc;border-top:1px solid #e4edf7;border-bottom:1px solid #e4edf7"></div>
<div class="sep" style="left:106px"></div>
<div class="sep" style="left:216.5px"></div>
<div class="sep" style="left:318.5px"></div>
<div class="sep" style="left:393px"></div>
<div class="sep" style="left:502.5px"></div>
<div class="sep" style="left:620px"></div>
<div class="a" style="left:637.5px;top:392px;width:3px;height:29px;background:#aab5c6;border-radius:1px"></div>

<!-- right panel -->
<svg class="a" style="left:735px;top:60px" width="9" height="8" viewBox="0 0 9 8" fill="none" stroke="#4a5468" stroke-width="1"><path d="M0.5 4 H8 M5 1 L8 4 L5 7"/></svg>
<div class="a" style="left:641px;top:75.5px;width:109px;height:1px;background:#e9f0f7"></div>
<svg class="a" style="left:734.7px;top:81.5px" width="6" height="5" viewBox="0 0 6 5" fill="none" stroke="#aab3c2" stroke-width="0.8"><path d="M0.5,3.5 L3,1 L5.5,3.5"/></svg>
<div class="a" style="left:645px;top:96.5px;width:98px;height:18px;border:1px solid #e3ecf6;border-radius:3px;background:#f2f7fc"></div>
<svg class="a" style="left:730.1px;top:103.3px" width="6" height="5" viewBox="0 0 6 5" fill="none" stroke="#aab3c2" stroke-width="0.8"><path d="M0.5,1 L3,3.5 L5.5,1"/></svg>
<div class="a" style="left:641px;top:118px;width:106px;height:1px;background:#e9f0f7"></div>
<div class="ffrow" style="top:118.5px"><svg class="a" style="left:5.7px;top:6.5px" width="11" height="11" viewBox="0 0 11 11" fill="none" stroke="#8a93a5" stroke-width="0.7"><circle cx="5.5" cy="5.5" r="4.6"/><path d="M3.2 4.2 A2.6 2.6 0 0 1 6.8 3.2" stroke-width="0.6"/><path d="M7.8 6.8 A2.6 2.6 0 0 1 4.2 7.8" stroke-width="0.6"/><circle cx="5.3" cy="5.3" r="0.9" fill="#8a93a5" stroke="none"/></svg></div>
<div class="ffrow" style="top:141.1px"><svg class="a" style="left:5.7px;top:6.5px" width="11" height="11" viewBox="0 0 11 11" fill="none" stroke="#8a93a5" stroke-width="0.7"><circle cx="5.5" cy="5.5" r="4.6"/><path d="M3.2 4.2 A2.6 2.6 0 0 1 6.8 3.2" stroke-width="0.6"/><path d="M7.8 6.8 A2.6 2.6 0 0 1 4.2 7.8" stroke-width="0.6"/><circle cx="5.3" cy="5.3" r="0.9" fill="#8a93a5" stroke="none"/></svg></div>
<div class="ffrow" style="top:163.7px"><svg class="a" style="left:5.7px;top:6.5px" width="11" height="11" viewBox="0 0 11 11" fill="none" stroke="#8a93a5" stroke-width="0.7"><circle cx="5.5" cy="5.5" r="4.6"/><path d="M3.2 4.2 A2.6 2.6 0 0 1 6.8 3.2" stroke-width="0.6"/><path d="M7.8 6.8 A2.6 2.6 0 0 1 4.2 7.8" stroke-width="0.6"/><circle cx="5.3" cy="5.3" r="0.9" fill="#8a93a5" stroke="none"/></svg></div>
<div class="ffrow" style="top:186.3px"><svg class="a" style="left:5.7px;top:6.5px" width="11" height="11" viewBox="0 0 11 11" fill="none" stroke="#8a93a5" stroke-width="0.7"><circle cx="5.5" cy="5.5" r="4.6"/><path d="M3.2 4.2 A2.6 2.6 0 0 1 6.8 3.2" stroke-width="0.6"/><path d="M7.8 6.8 A2.6 2.6 0 0 1 4.2 7.8" stroke-width="0.6"/><circle cx="5.3" cy="5.3" r="0.9" fill="#8a93a5" stroke="none"/></svg></div>
<svg class="a" style="left:734.6px;top:214.2px" width="6" height="5" viewBox="0 0 6 5" fill="none" stroke="#aab3c2" stroke-width="0.8"><path d="M0.5,3.5 L3,1 L5.5,3.5"/></svg>
<div class="ffrow" style="top:225px"><svg class="a" style="left:6px;top:7px" width="10" height="9" viewBox="0 0 10 9" fill="none" stroke="#8a93a5" stroke-width="0.8"><rect x="1.5" y="1" width="7" height="7" rx="1.5"/><path d="M0.5 3 H1.5 M0.5 6 H1.5 M3.5 1 V8 M6.5 1 V8"/></svg></div>
<div class="ffrow" style="top:247.5px"><svg class="a" style="left:6px;top:7px" width="10" height="9" viewBox="0 0 10 9" fill="none" stroke="#8a93a5" stroke-width="0.8"><rect x="1.5" y="1" width="7" height="7" rx="1.5"/><path d="M0.5 3 H1.5 M0.5 6 H1.5 M3.5 1 V8 M6.5 1 V8"/></svg></div>
<svg class="a" style="left:734.6px;top:275.4px" width="6" height="5" viewBox="0 0 6 5" fill="none" stroke="#aab3c2" stroke-width="0.8"><path d="M0.5,1 L3,3.5 L5.5,1"/></svg>
<div class="a" style="left:641px;top:285px;width:106px;height:1px;background:#e9f0f7"></div>
<div class="a" style="left:747px;top:76px;width:3px;height:183px;background:#aab5c6;border-radius:1px"></div>
<div class="a t" style="left:8.0px;top:10.0px;font-size:9.43px;font-weight:bold;color:#4a5468;">Spectral Analysis</div>
<div class="a t m" style="left:111.3px;top:12.0px;font-size:7.88px;font-weight:normal;color:#a3acba;">H5218-VR2 / H5218-M2</div>
<div class="a t" style="left:29.3px;top:31.0px;font-size:10.12px;font-weight:bold;color:#a24af0;">0.000</div>
<div class="a t" style="left:69.8px;top:30.0px;font-size:10.71px;font-weight:bold;color:#a24af0;">S #1&nbsp;&nbsp;-&nbsp;&nbsp;23/04/2024 12:00 PM</div>
<div class="a t m" style="left:672.0px;top:32.0px;font-size:7.89px;font-weight:normal;color:#5b6577;">Compare Sample</div>
<div class="a t m" style="left:17.0px;top:66.0px;font-size:7.3px;font-weight:normal;color:#7d8799;">Settings</div>
<div class="a t m" style="left:26.5px;top:84.0px;font-size:7.71px;font-weight:normal;color:#4b5567;">Spectrum: <b>Velocity</b></div>
<div class="a t m" style="left:136.7px;top:83.0px;font-size:8.32px;font-weight:normal;color:#4b5567;">Unit: mm/s</div>
<div class="a t m" style="left:220.4px;top:84.0px;font-size:7.65px;font-weight:normal;color:#4b5567;">Y Scale</div>
<div class="a t m" style="left:289.2px;top:84.0px;font-size:7.78px;font-weight:normal;color:#4b5567;">Fundamental Frequency: <b>1,800RPM</b></div>
<div class="a t m" style="left:17.0px;top:107.0px;font-size:7.36px;font-weight:normal;color:#7d8799;">Tools</div>
<div class="a t" style="left:29.2px;top:124.0px;font-size:7.23px;font-weight:bold;color:#ffffff;">Cursor</div>
<div class="a t m" style="left:85.8px;top:124.0px;font-size:7.88px;font-weight:normal;color:#808a9c;">Ruler</div>
<div class="a t m" style="left:17.0px;top:153.0px;font-size:8.0px;font-weight:normal;color:#5e687a;">Velocity Spectrum</div>
<div class="a t m" style="left:102.0px;top:153.0px;font-size:7.96px;font-weight:normal;color:#3497f0;">Waveform</div>
<div class="a t" style="left:501.3px;top:153.0px;font-size:7.62px;font-weight:bold;color:#58b2da;">Horizontal</div>
<div class="a t" style="left:562.8px;top:153.0px;font-size:7.21px;font-weight:bold;color:#4838bc;">Axis Y</div>
<div class="a t" style="left:610.0px;top:154.0px;font-size:7.17px;font-weight:bold;color:#bcc6a8;">Axis Z</div>
<div class="a t m" style="left:306.3px;top:347.0px;font-size:7.41px;font-weight:normal;color:#8a93a6;">Time (s)</div>
<div class="a t mh" style="left:7.0px;top:380.0px;font-size:8.46px;font-weight:normal;color:#3f4a5c;">Identifier</div>
<div class="a t mh" style="left:111.0px;top:380.0px;font-size:8.3px;font-weight:normal;color:#3f4a5c;">Time (s)</div>
<div class="a t mh" style="left:220.2px;top:381.0px;font-size:8.25px;font-weight:normal;color:#3f4a5c;">Difference (s)</div>
<div class="a t mh" style="left:322.0px;top:380.0px;font-size:8.39px;font-weight:normal;color:#3f4a5c;">Horizontal (mm/s)</div>
<div class="a t mh" style="left:398.0px;top:380.0px;font-size:8.33px;font-weight:normal;color:#3f4a5c;">Axial (mm/s)</div>
<div class="a t mh" style="left:507.7px;top:380.0px;font-size:8.45px;font-weight:normal;color:#3f4a5c;">Vertical (mm/s)</div>
<div class="a t" style="left:648.0px;top:60.0px;font-size:7.33px;font-weight:bold;color:#4a5468;">Fault Frequencies</div>
<div class="a t m" style="left:647.0px;top:82.0px;font-size:6.96px;font-weight:normal;color:#b3bccb;">Bearings</div>
<div class="a t m" style="left:652.0px;top:102.0px;font-size:7.74px;font-weight:normal;color:#4b5567;">6202-2Z SKF</div>
<div class="a t m" style="left:660.6px;top:127.0px;font-size:8.0px;font-weight:normal;color:#717c90;">BPFI</div>
<div class="a t m" style="left:660.6px;top:149.0px;font-size:8.0px;font-weight:normal;color:#717c90;">BSF</div>
<div class="a t m" style="left:660.6px;top:172.0px;font-size:8.0px;font-weight:normal;color:#717c90;">BPFO</div>
<div class="a t m" style="left:660.6px;top:194.0px;font-size:8.0px;font-weight:normal;color:#717c90;">FTF</div>
<div class="a t m" style="left:646.9px;top:213.0px;font-size:7.38px;font-weight:normal;color:#b3bccb;">Motor</div>
<div class="a t m" style="left:660.6px;top:232.0px;font-size:7.84px;font-weight:normal;color:#717c90;">RBPF</div>
<div class="a t m" style="left:661.6px;top:255.0px;font-size:7.56px;font-weight:normal;color:#717c90;">2X FL</div>
<div class="a t m" style="left:646.9px;top:274.0px;font-size:6.98px;font-weight:normal;color:#b3bccb;">Blades/Propellers</div>
</body></html>
